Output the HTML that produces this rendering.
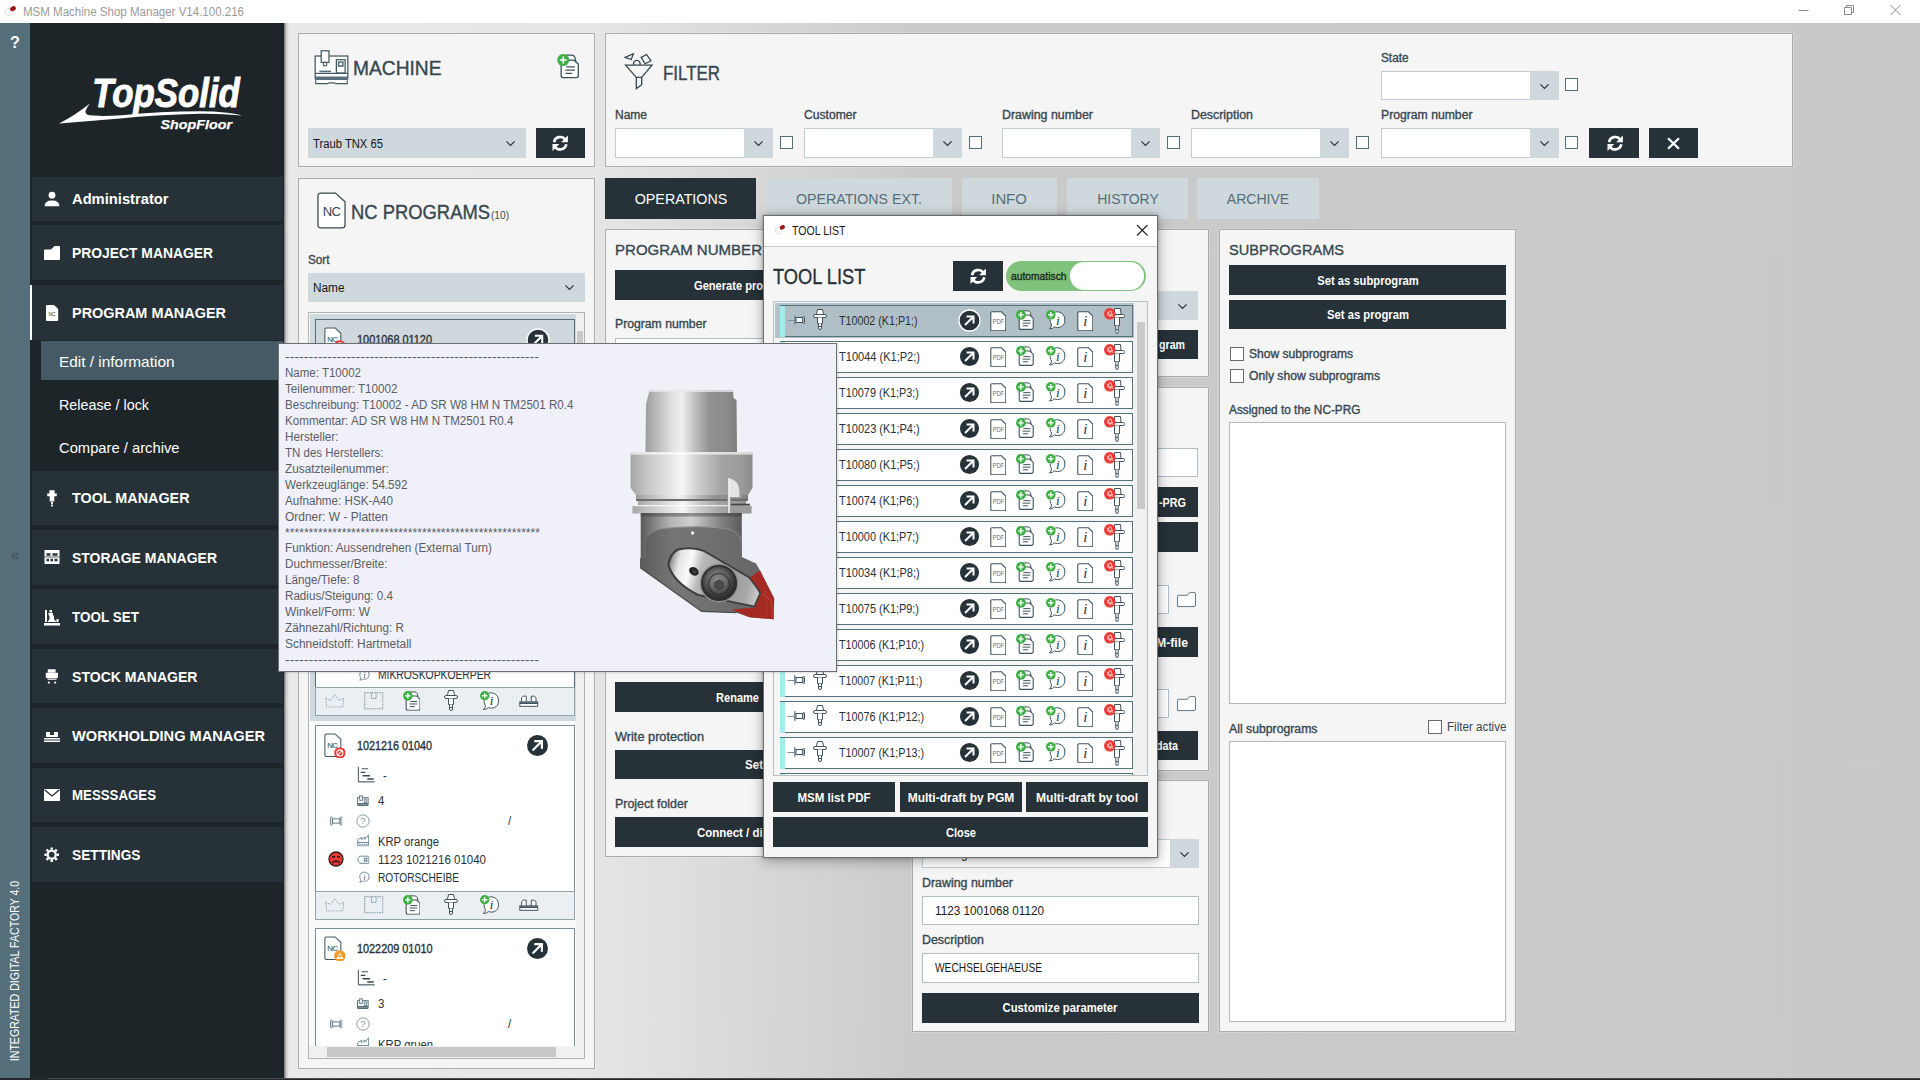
<!DOCTYPE html>
<html><head><meta charset="utf-8"><title>MSM Machine Shop Manager</title>
<style>
html,body{margin:0;padding:0;}
body{width:1920px;height:1080px;position:relative;overflow:hidden;background:#c9c9c9;font-family:"Liberation Sans",sans-serif;}
.b{position:absolute;display:block;}
.t{position:absolute;white-space:pre;}
</style></head><body>

<svg width="0" height="0" style="position:absolute">
<defs>
<linearGradient id="gcyl" x1="0" x2="1" y1="0" y2="0">
 <stop offset="0" stop-color="#9b9b9b"/><stop offset="0.1" stop-color="#b5b5b5"/><stop offset="0.3" stop-color="#e2e2e2"/><stop offset="0.4" stop-color="#efefef"/><stop offset="0.55" stop-color="#bcbcbc"/><stop offset="0.7" stop-color="#929292"/><stop offset="0.9" stop-color="#8a8a8a"/><stop offset="1" stop-color="#7c7c7c"/>
</linearGradient>
<linearGradient id="gcyl2" x1="0" x2="1" y1="0" y2="0">
 <stop offset="0" stop-color="#a5a5a5"/><stop offset="0.12" stop-color="#c2c2c2"/><stop offset="0.35" stop-color="#eaeaea"/><stop offset="0.42" stop-color="#f6f6f6"/><stop offset="0.55" stop-color="#cfcfcf"/><stop offset="0.75" stop-color="#a3a3a3"/><stop offset="0.9" stop-color="#9c9c9c"/><stop offset="1" stop-color="#8c8c8c"/>
</linearGradient>
<linearGradient id="gdark" x1="0" x2="1" y1="0" y2="0">
 <stop offset="0" stop-color="#555"/><stop offset="0.3" stop-color="#9a9a9a"/><stop offset="0.55" stop-color="#7a7a7a"/><stop offset="1" stop-color="#555"/>
</linearGradient>
<linearGradient id="gplate" x1="0" x2="1" y1="0" y2="1">
 <stop offset="0" stop-color="#6c6c6c"/><stop offset="0.35" stop-color="#d8d8d8"/><stop offset="0.6" stop-color="#b5b5b5"/><stop offset="1" stop-color="#6a6a6a"/>
</linearGradient>
<radialGradient id="gscrew" cx="0.45" cy="0.4" r="0.6">
 <stop offset="0" stop-color="#8c8c8c"/><stop offset="0.45" stop-color="#6a6a6a"/><stop offset="0.8" stop-color="#3c3c3c"/><stop offset="1" stop-color="#2a2a2a"/>
</radialGradient>

<symbol id="i-refresh" viewBox="0 0 16 16">
 <path d="M2.7 7.1A5.4 5.4 0 0 1 12.5 5" fill="none" stroke="#fff" stroke-width="2.3"/>
 <path d="M14.7 1.3V7.2H8.8Z" fill="#fff"/>
 <path d="M13.3 8.9A5.4 5.4 0 0 1 3.5 11" fill="none" stroke="#fff" stroke-width="2.3"/>
 <path d="M1.3 14.7V8.8H7.2Z" fill="#fff"/>
</symbol>
<symbol id="i-chev" viewBox="0 0 12 8">
 <path d="M1.5 1.5L6 6L10.5 1.5" fill="none" stroke="#263238" stroke-width="1.3"/>
</symbol>
<symbol id="i-arrow" viewBox="0 0 22 22">
 <circle cx="11" cy="11" r="10" fill="#263238"/>
 <path d="M6.3 15.7L15 7M7.9 6.8H15.2V14.1" fill="none" stroke="#fff" stroke-width="2.1"/>
</symbol>
<symbol id="i-arrow-sel" viewBox="0 0 24 24">
 <circle cx="12" cy="12" r="11" fill="#263238" stroke="#fff" stroke-width="1.4"/>
 <path d="M7.3 16.7L16 8M8.9 7.8H16.2V15.1" fill="none" stroke="#fff" stroke-width="2.1"/>
</symbol>
<symbol id="i-pdf" viewBox="0 0 17 21">
 <path d="M2 0.8H11.6L16 5.2V18.6Q16 20 14.6 20H2.2Q0.8 20 0.8 18.6V2Q0.8 0.8 2 0.8Z" fill="#fff" stroke="#3f535d" stroke-width="1.1"/>
 <text x="8.5" y="12.9" font-family="Liberation Sans, sans-serif" font-size="6.6" fill="#6b6b6b" text-anchor="middle" textLength="11.6" lengthAdjust="spacingAndGlyphs">PDF</text>
</symbol>
<symbol id="i-idoc" viewBox="0 0 17 21">
 <path d="M2 0.8H11.6L16 5.2V18.6Q16 20 14.6 20H2.2Q0.8 20 0.8 18.6V2Q0.8 0.8 2 0.8Z" fill="#fff" stroke="#3f535d" stroke-width="1.1"/>
 <text x="8.4" y="15.4" font-family="Liberation Serif, serif" font-style="italic" font-size="15" fill="#263238" text-anchor="middle">i</text>
</symbol>
<symbol id="i-docplus" viewBox="0 0 18 20">
 <path d="M7 0.9H11.8Q13.6 0.9 14.4 2.6L15.2 5.6H7Z" fill="#fff" stroke="#3f535d" stroke-width="1"/>
 <path d="M4 5H13.6L17.2 8.2V17.8Q17.2 19.4 15.6 19.4H4.8Q3.2 19.4 3.2 17.8V6Z" fill="#fff" stroke="#3f535d" stroke-width="1.1"/>
 <path d="M7.3 10.6H14.4M6.6 13.1H14.4M6.8 15.8H12" stroke="#3f535d" stroke-width="1"/>
 <circle cx="4.9" cy="4.9" r="4.9" fill="#3cb043"/>
 <path d="M4.9 2.1V7.7M2.1 4.9H7.7" stroke="#fff" stroke-width="1.4"/>
</symbol>
<symbol id="i-talkplus" viewBox="0 0 20 20">
 <path d="M4.2 9.6L8.6 2.3Q10.6 1.5 12.6 1.9Q18.9 3.4 18.9 10Q18.9 15.2 14.6 17Q11.6 18.2 8.6 16.9Q6.6 18.9 3.4 18.9Q5.6 17.2 5.6 15Q4.6 13.6 4.3 11.6Z" fill="#fff"/>
 <path d="M8.6 2.3Q10.6 1.5 12.6 1.9Q18.9 3.4 18.9 10Q18.9 15.2 14.6 17Q11.6 18.2 8.6 16.9Q6.6 18.9 3.4 18.9Q5.6 17.2 5.6 15Q4.6 13.6 4.3 11.6L4.2 9.6" fill="none" stroke="#3f535d" stroke-width="1"/>
 <text x="11.8" y="14.8" font-family="Liberation Serif, serif" font-style="italic" font-size="13.5" fill="#263238" text-anchor="middle">i</text>
 <circle cx="4.8" cy="4.8" r="4.8" fill="#3cb043"/>
 <path d="M4.8 2.1V7.5M2.1 4.8H7.5" stroke="#fff" stroke-width="1.4"/>
</symbol>
<symbol id="i-talk" viewBox="0 0 24 24">
 <path d="M7 6Q10 3.6 14 3.8Q21.5 5 21.5 12Q21.5 17.5 16.5 19.6Q13.5 20.7 10.2 19.6Q8 21.6 4.8 21.6Q6.9 19.8 6.8 17.3Q4.6 15 5 11Q5.3 8 7 6Z" fill="none" stroke="#455a64" stroke-width="1.2"/>
 <text x="13.4" y="17" font-family="Liberation Serif, serif" font-style="italic" font-size="13" fill="#263238" text-anchor="middle">i</text>
</symbol>
<symbol id="i-tool" viewBox="0 0 14 21">
 <path d="M4.5 0.5H9.5L10.6 5.5H3.4Z" fill="#fff" stroke="#3f535d" stroke-width="1"/>
 <rect x="0.5" y="5.5" width="13" height="3" rx="1.5" fill="#fff" stroke="#3f535d" stroke-width="1"/>
 <path d="M4.5 8.5V14.5H9.5V8.5" fill="#fff" stroke="#3f535d" stroke-width="1"/>
 <path d="M5.5 14.5V19Q5.5 20.5 7 20.5Q8.5 20.5 8.5 19V14.5" fill="#fff" stroke="#3f535d" stroke-width="1"/>
 <path d="M5.5 17.5H8.5" stroke="#3f535d" stroke-width="1"/>
</symbol>
<symbol id="i-toolred" viewBox="0 0 22 28">
 <path d="M10.5 0.5H16.5L17 6.5H10.5Z" fill="#fff" stroke="#3f535d" stroke-width="1"/>
 <rect x="5.5" y="6.5" width="15" height="3" rx="1.2" fill="#fff" stroke="#3f535d" stroke-width="1"/>
 <path d="M10.5 9.5V17.5H15.5V9.5" fill="#fff" stroke="#3f535d" stroke-width="1"/>
 <path d="M11.8 17.5V24.2Q11.8 25.5 13 25.5Q14.2 25.5 14.2 24.2V17.5" fill="#fff" stroke="#3f535d" stroke-width="1"/>
 <path d="M11.8 21.5H14.2" stroke="#3f535d" stroke-width="0.9"/>
 <circle cx="5.8" cy="5.8" r="5.8" fill="#ee3a35"/>
 <path d="M3.4 6.9L5.2 3.4Q6.4 2.6 7.3 3.6L8.3 7.6Z" fill="none" stroke="#fde0de" stroke-width="0.9"/>
 <path d="M5 8.4Q6 9.4 7 8.4M2.8 3.8L8.8 8.6" fill="none" stroke="#fbc1bd" stroke-width="0.8"/>
</symbol>
<symbol id="i-pin" viewBox="0 0 18 10">
 <path d="M0.4 5.5H7.5" stroke="#78909c" stroke-width="1"/>
 <path d="M7.8 0.3V9.7" stroke="#78909c" stroke-width="1.6"/>
 <rect x="9" y="2.5" width="6.6" height="5" fill="#fff" stroke="#3f535d" stroke-width="1"/>
 <rect x="15.9" y="1.5" width="1.6" height="7" rx="0.7" fill="#fff" stroke="#3f535d" stroke-width="1"/>
</symbol>
<symbol id="i-ncfile" viewBox="0 0 30 38">
 <path d="M4 1H19L29 10V34Q29 37 26 37H4Q1 37 1 34V4Q1 1 4 1Z" fill="#fff" stroke="#37474f" stroke-width="1.3"/>
 <text x="15" y="24.6" font-family="Liberation Sans, sans-serif" font-size="13.5" fill="#37474f" text-anchor="middle" letter-spacing="-0.6">NC</text>
</symbol>
<symbol id="i-ncsmall" viewBox="0 0 22 28">
 <path d="M3 1H12.5L19 7V24Q19 26.5 16.5 26.5H3Q1 26.5 1 24.5V3Q1 1 3 1Z" fill="#fff" stroke="#455a64" stroke-width="1.2"/>
 <text x="9.3" y="16.6" font-family="Liberation Sans, sans-serif" font-size="8.8" fill="#455a64" text-anchor="middle" letter-spacing="-0.6" stroke="#455a64" stroke-width="0.15">NC</text>
</symbol>
<symbol id="i-noentry" viewBox="0 0 12 12">
 <circle cx="6" cy="6" r="5.8" fill="#e53935"/>
 <circle cx="6" cy="6" r="3.1" fill="none" stroke="#fff" stroke-width="1.1"/>
 <path d="M3.9 8.1L8.1 3.9" stroke="#fff" stroke-width="1.1"/>
</symbol>
<symbol id="i-warn" viewBox="0 0 12 12">
 <circle cx="6" cy="6" r="5.8" fill="#f59a23"/>
 <path d="M6 3.2L8.6 7.6H3.4Z" fill="none" stroke="#fff" stroke-width="0.9"/>
 <path d="M2.6 8.6H9.4" stroke="#fff" stroke-width="0.9"/>
</symbol>
<symbol id="i-gantt" viewBox="0 0 20 18">
 <path d="M1.5 0.5V16.5H19" fill="none" stroke="#37474f" stroke-width="1"/>
 <path d="M1.5 17.5H19" stroke="#90a4ae" stroke-width="1" stroke-dasharray="1 1"/>
 <path d="M5 2.5H12" stroke="#37474f" stroke-width="1"/>
 <path d="M4 6.5H9" stroke="#37474f" stroke-width="1.4"/>
 <path d="M6 10H14" stroke="#37474f" stroke-width="1.4"/>
 <path d="M11 13.5H18" stroke="#37474f" stroke-width="1.6"/>
</symbol>
<symbol id="i-mach-s" viewBox="0 0 14 12">
 <rect x="0.5" y="2.5" width="12" height="8" fill="#fff" stroke="#546e7a" stroke-width="1"/>
 <rect x="3" y="0.5" width="3" height="5" fill="#fff" stroke="#546e7a" stroke-width="1"/>
 <rect x="8" y="4" width="3" height="4" fill="#cfd8dc" stroke="#546e7a" stroke-width="0.8"/>
 <path d="M0.5 9H12.5M0.5 11.2H12.5" stroke="#546e7a" stroke-width="1.2"/>
</symbol>
<symbol id="i-clamp" viewBox="0 0 14 10">
 <rect x="0.6" y="0.6" width="2" height="8.8" rx="0.8" fill="#fff" stroke="#546e7a" stroke-width="0.9"/>
 <rect x="11.4" y="0.6" width="2" height="8.8" rx="0.8" fill="#fff" stroke="#546e7a" stroke-width="0.9"/>
 <rect x="3" y="2.6" width="8" height="4.8" fill="#fff" stroke="#546e7a" stroke-width="1"/>
</symbol>
<symbol id="i-q" viewBox="0 0 14 14">
 <circle cx="7" cy="7" r="6.2" fill="#fff" stroke="#7f8c93" stroke-width="0.9"/>
 <text x="7" y="10.4" font-family="Liberation Sans, sans-serif" font-size="9.5" fill="#8a969c" text-anchor="middle">?</text>
</symbol>
<symbol id="i-factory" viewBox="0 0 14 14">
 <path d="M0.8 13.2V6.4L4.8 3.6V6.2L8.8 3.4V6L13 0.8V13.2Z" fill="#fff" stroke="#607d8b" stroke-width="1"/>
 <path d="M0.8 9.4H13" stroke="#607d8b" stroke-width="1"/>
 <path d="M2.2 11.4H12" stroke="#607d8b" stroke-width="1.3" stroke-dasharray="1.7 1"/>
</symbol>
<symbol id="i-tag" viewBox="0 0 14 10">
 <path d="M3.5 1H12.5Q13.3 1 13.3 1.8V8.2Q13.3 9 12.5 9H3.5Q0.8 7.5 0.8 5Q0.8 2.5 3.5 1Z" fill="#fff" stroke="#607d8b" stroke-width="1"/>
 <path d="M8.6 2.4V7.6M10.8 2.4V7.6M7.4 3.8H12M7.4 6.2H12" stroke="#607d8b" stroke-width="0.9"/>
</symbol>
<symbol id="i-sad" viewBox="0 0 16 16">
 <circle cx="8" cy="8" r="7" fill="#e53935" stroke="#2e1a1a" stroke-width="1.3"/>
 <path d="M4 5.8H7M9 5.8H12" stroke="#2e1212" stroke-width="1.5"/>
 <path d="M4.4 11.8Q8 8.2 11.6 11.8" fill="none" stroke="#2e1212" stroke-width="1.3"/>
</symbol>
<symbol id="i-crown" viewBox="0 0 20 14">
 <path d="M0.8 4.3L5.6 6.6L10 0.8L14.6 6.6L19.2 4.3L18.2 13.3H1.8Z" fill="none" stroke="#90a4ae" stroke-width="1" stroke-dasharray="1.6 0.9"/>
</symbol>
<symbol id="i-box" viewBox="0 0 20 18">
 <rect x="0.7" y="0.7" width="18.6" height="16.6" fill="none" stroke="#78909c" stroke-width="1.1" stroke-dasharray="1.5 1"/>
 <path d="M7.6 0.7V6.6H12.4V0.7" fill="none" stroke="#78909c" stroke-width="1" stroke-dasharray="1.5 0.8"/>
</symbol>
<symbol id="i-vise" viewBox="0 0 20 13">
 <path d="M2.6 7V2.8L4.4 1.2H7.4V7" fill="#fff" stroke="#3f535d" stroke-width="1"/>
 <path d="M12.6 7V1.2H15.6L17.4 2.8V7" fill="#fff" stroke="#3f535d" stroke-width="1"/>
 <rect x="0.8" y="7" width="18.4" height="4.6" fill="#fff" stroke="#3f535d" stroke-width="1"/>
 <path d="M0.8 8.4H19.2" stroke="#3f535d" stroke-width="1.7"/>
</symbol>
<symbol id="i-folder" viewBox="0 0 22 18">
 <path d="M1.5 16.5V6Q1.5 4.5 3 4.5H12L14.5 1.5H19Q20.5 1.5 20.5 3V15Q20.5 16.5 19 16.5Z" fill="#fff" stroke="#546e7a" stroke-width="1"/>
</symbol>
<symbol id="i-x" viewBox="0 0 16 16">
 <path d="M2.2 2.4L13.8 13.6M13.8 2.4L2.2 13.6" stroke="#fff" stroke-width="2.5"/>
</symbol>
<symbol id="i-appicon" viewBox="0 0 16 14">
 <ellipse cx="5.5" cy="8.5" rx="4.6" ry="3.6" fill="#fff" stroke="#d5d5d5" stroke-width="0.8" transform="rotate(-30 5.5 8.5)"/>
 <ellipse cx="9.6" cy="5" rx="3.2" ry="2.4" fill="#a01010" transform="rotate(-30 9.6 5)"/>
</symbol>
<symbol id="i-machine" viewBox="0 0 36 36">
 <rect x="1.2" y="6.2" width="33.6" height="21.8" fill="#fff" stroke="#455a64" stroke-width="1.3"/>
 <path d="M1.2 24H34.8" stroke="#455a64" stroke-width="1.2"/>
 <rect x="7.4" y="0.8" width="8" height="12" fill="#fff" stroke="#455a64" stroke-width="1.3"/>
 <rect x="9.8" y="12.8" width="3.2" height="3.4" fill="#fff" stroke="#455a64" stroke-width="1.1"/>
 <path d="M5.5 22H17.5" stroke="#546e7a" stroke-width="1.6"/>
 <rect x="23" y="10" width="9" height="13.6" fill="#fff" stroke="#455a64" stroke-width="1.3"/>
 <rect x="25.3" y="12.5" width="4.4" height="4" fill="#fff" stroke="#546e7a" stroke-width="1.6"/>
 <rect x="0.8" y="28" width="34.4" height="3" fill="#546e7a"/>
 <path d="M1.8 31V34.6H14L15 33.8H21L22 34.6H34.2V31" fill="#fff" stroke="#455a64" stroke-width="1.2"/>
</symbol>
<symbol id="i-filter" viewBox="0 0 30 40">
 <path d="M1.5 12.5H28.5L18 25V32.5L12.5 36.5V25Z" fill="none" stroke="#37474f" stroke-width="1.35"/>
 <path d="M12.5 25H18" stroke="#37474f" stroke-width="1.35"/>
 <path d="M9.9 12.3A3.4 3.4 0 1 1 16.1 12.3" fill="none" stroke="#37474f" stroke-width="1.35"/>
 <path d="M1 4.5L9.5 0.8L7.3 6.7Z" fill="none" stroke="#37474f" stroke-width="1.3"/>
 <path d="M17.5 4.5L23 1.5L27.5 8L21.5 11Z" fill="none" stroke="#37474f" stroke-width="1.3"/>
</symbol>
</defs>
</svg>

<svg width="0" height="0" style="position:absolute"><defs>
<symbol id="s-user" viewBox="0 0 20 20"><circle cx="10" cy="6.2" r="3.4" fill="#fff"/><path d="M2.6 17.2Q2.6 11.4 10 11.4Q17.4 11.4 17.4 17.2Z" fill="#fff"/></symbol>
<symbol id="s-folder" viewBox="0 0 20 20"><path d="M2 17V7.5Q2 6.5 3 6.5H9L12.5 3H17Q18 3 18 4V16Q18 17 17 17Z" fill="#fff"/></symbol>
<symbol id="s-nc" viewBox="0 0 20 20"><path d="M5 2H12L16.2 6V17Q16.2 18 15.2 18H5Q4 18 4 17V3Q4 2 5 2Z" fill="#fff"/><text x="10" y="13" font-family="Liberation Sans, sans-serif" font-size="5" fill="#263238" text-anchor="middle">NC</text></symbol>
<symbol id="s-tool" viewBox="0 0 20 20"><path d="M7.4 2.2H12.6V5.4H14.8V8.2H12.3V13.4H7.7V8.2H5.2V5.4H7.4ZM9.1 14H10.9V16H9.1ZM9.1 16.6H10.9V18.6H9.1Z" fill="#fff"/></symbol>
<symbol id="s-storage" viewBox="0 0 20 20"><path d="M2.5 3H17.5V17H2.5Z" fill="#fff"/><path d="M4.5 6.2H8.5V8.8H4.5ZM10.5 6.2H15.5V8.8H10.5ZM4.5 11.8H7V14.2H4.5ZM8.5 11.8H11V14.2H8.5ZM12.5 11.8H15.5V14.2H12.5Z" fill="#263238"/><path d="M2.5 10H17.5" stroke="#263238" stroke-width="0.8"/></symbol>
<symbol id="s-toolset" viewBox="0 0 20 20"><path d="M3 3H5V15H3ZM2 16H18V18.5H2ZM6.5 6H11V8L12 9V12L14.5 15H5.5L7.5 12V9L6.5 8ZM7.5 3H10V5.5H7.5ZM14.5 12H16.5V15H14.5Z" fill="#fff"/></symbol>
<symbol id="s-stock" viewBox="0 0 20 20"><path d="M5.8 3.2H13.6V6.4H5.8ZM3.8 6.8H16V12H3.8ZM5.4 12.6H14.6V13.8H5.4Z" fill="#fff"/><circle cx="6.8" cy="16.6" r="1.1" fill="#fff"/><circle cx="13.2" cy="16.6" r="1.1" fill="#fff"/></symbol>
<symbol id="s-work" viewBox="0 0 20 20"><path d="M4 6H8V9H12V6H16V11H4ZM2 12H18V13.4H2ZM2 14.4H18V16H2Z" fill="#fff"/></symbol>
<symbol id="s-mail" viewBox="0 0 20 20"><path d="M2 4H18V16H2Z" fill="#fff"/><path d="M2.5 4.8L10 11L17.5 4.8" fill="none" stroke="#263238" stroke-width="1.3"/></symbol>
<symbol id="s-gear" viewBox="0 0 20 20"><circle cx="10" cy="10" r="4.6" fill="none" stroke="#fff" stroke-width="2.6"/><g stroke="#fff" stroke-width="2.8"><path d="M10 1.6V4.4M10 15.6V18.4M1.6 10H4.4M15.6 10H18.4M4.1 4.1L6 6M14 14L15.9 15.9M4.1 15.9L6 14M14 6L15.9 4.1"/></g></symbol>
</defs></svg>
<div class="b" style="left:0px;top:0px;width:1920px;height:23px;background:#ffffff;"></div>
<svg class="b" style="left:4px;top:4px;" width="15" height="13"><use href="#i-appicon"/></svg>
<div class="t" style="left:23px;top:2px;height:20px;line-height:20px;font-size:12px;color:#9a9a9a;transform:scaleX(0.9603);transform-origin:0 50%;">MSM Machine Shop Manager V14.100.216</div>
<svg class="b" style="left:1780px;top:0" width="140" height="23"><path d="M18.5 10.5H28.5" stroke="#8a8a8a" stroke-width="1" fill="none"/><path d="M64.5 7.5H71.5V14.5H64.5ZM66.5 7.5V5.5H73.5V12.5H71.5" stroke="#8a8a8a" stroke-width="1" fill="none"/><path d="M110.5 5L120.5 15M120.5 5L110.5 15" stroke="#8a8a8a" stroke-width="1" fill="none"/></svg>
<div class="b" style="left:283px;top:23px;width:1637px;height:1055px;background:linear-gradient(90deg,#e9e9e9 0px,#e6e6e6 300px,#cacaca 640px,#c9c9c9 100%);"></div>
<div class="b" style="left:0px;top:23px;width:30px;height:1055px;background:#546e7a;"></div>
<div class="t" style="left:15px;top:33px;height:20px;line-height:20px;font-size:17px;color:#ffffff;font-weight:700;transform:translateX(-50%) scaleX(0.9550);transform-origin:50% 50%;">?</div>
<div class="t" style="left:15.3px;top:545px;height:20px;line-height:20px;font-size:16px;color:#3e5460;transform:translateX(-50%) scaleX(0.9550);transform-origin:50% 50%;">«</div>
<div class="t" style="left:15px;top:970.5px;font-size:12px;color:#fff;transform:translate(-50%,-50%) rotate(-90deg) scaleX(0.882);">INTEGRATED DIGITAL FACTORY 4.0</div>
<div class="b" style="left:30px;top:23px;width:254px;height:1055px;background:#1d2529;"></div>
<div class="b" style="left:284px;top:23px;width:5px;height:1055px;background:linear-gradient(90deg,rgba(0,0,0,0.5),rgba(0,0,0,0.12) 50%,rgba(0,0,0,0));"></div>
<div class="b" style="left:0px;top:1078px;width:1920px;height:2px;background:#23272a;"></div>
<div class="b" style="left:48px;top:1078px;width:1872px;height:1px;background:#4a4d50;"></div>
<svg class="b" style="left:50px;top:70px" width="210" height="70" viewBox="0 0 210 70">
<text x="42.3" y="36.6" font-family="Liberation Sans, sans-serif" font-style="italic" font-weight="bold" font-size="41.5" fill="#fff" stroke="#fff" stroke-width="1" textLength="147.5" lengthAdjust="spacingAndGlyphs">TopSolid</text>
<path d="M9 53.5Q24 46 40 33.5Q33 42 37 44.5Q46 47 72 45.2Q110 41.5 150 41.3Q178 41.5 192 45.5Q170 43.5 150 43.8Q105 45 70 48.5Q40 51 9 53.5Z" fill="#fff"/>
<text x="110.5" y="58.7" font-family="Liberation Sans, sans-serif" font-style="italic" font-weight="bold" font-size="13.2" fill="#fff" stroke="#fff" stroke-width="0.25" textLength="71.5" lengthAdjust="spacingAndGlyphs">ShopFloor</text>
</svg>
<div class="b" style="left:32px;top:177px;width:251px;height:44px;background:#263238;"></div>
<div class="t" style="left:72px;top:189.3px;height:20px;line-height:20px;font-size:15px;color:#ffffff;font-weight:700;transform:scaleX(0.9813);transform-origin:0 50%;">Administrator</div>
<svg class="b" style="left:42px;top:189.0px;" width="20" height="20"><use href="#s-user"/></svg>
<div class="b" style="left:32px;top:225px;width:251px;height:55px;background:#263238;"></div>
<div class="t" style="left:72px;top:242.8px;height:20px;line-height:20px;font-size:14.5px;color:#ffffff;font-weight:700;transform:scaleX(0.9564);transform-origin:0 50%;">PROJECT MANAGER</div>
<svg class="b" style="left:42px;top:242.5px;" width="20" height="20"><use href="#s-folder"/></svg>
<div class="b" style="left:32px;top:285px;width:251px;height:55px;background:#263238;"></div>
<div class="t" style="left:72px;top:302.8px;height:20px;line-height:20px;font-size:14.5px;color:#ffffff;font-weight:700;transform:scaleX(0.9957);transform-origin:0 50%;">PROGRAM MANAGER</div>
<svg class="b" style="left:42px;top:302.5px;" width="20" height="20"><use href="#s-nc"/></svg>
<div class="b" style="left:32px;top:471px;width:251px;height:54px;background:#263238;"></div>
<div class="t" style="left:72px;top:488.3px;height:20px;line-height:20px;font-size:14.5px;color:#ffffff;font-weight:700;transform:scaleX(0.9900);transform-origin:0 50%;">TOOL MANAGER</div>
<svg class="b" style="left:42px;top:488.0px;" width="20" height="20"><use href="#s-tool"/></svg>
<div class="b" style="left:32px;top:530px;width:251px;height:54.5px;background:#263238;"></div>
<div class="t" style="left:72px;top:547.55px;height:20px;line-height:20px;font-size:14.5px;color:#ffffff;font-weight:700;transform:scaleX(0.9642);transform-origin:0 50%;">STORAGE MANAGER</div>
<svg class="b" style="left:42px;top:547.25px;" width="20" height="20"><use href="#s-storage"/></svg>
<div class="b" style="left:32px;top:589.4px;width:251px;height:54.4px;background:#263238;"></div>
<div class="t" style="left:72px;top:606.9px;height:20px;line-height:20px;font-size:14.5px;color:#ffffff;font-weight:700;transform:scaleX(0.9308);transform-origin:0 50%;">TOOL SET</div>
<svg class="b" style="left:42px;top:606.6px;" width="20" height="20"><use href="#s-toolset"/></svg>
<div class="b" style="left:32px;top:649px;width:251px;height:54.4px;background:#263238;"></div>
<div class="t" style="left:72px;top:666.5px;height:20px;line-height:20px;font-size:14.5px;color:#ffffff;font-weight:700;transform:scaleX(0.9696);transform-origin:0 50%;">STOCK MANAGER</div>
<svg class="b" style="left:42px;top:666.2px;" width="20" height="20"><use href="#s-stock"/></svg>
<div class="b" style="left:32px;top:708.2px;width:251px;height:54.6px;background:#263238;"></div>
<div class="t" style="left:72px;top:725.8px;height:20px;line-height:20px;font-size:14.5px;color:#ffffff;font-weight:700;transform:scaleX(1.0067);transform-origin:0 50%;">WORKHOLDING MANAGER</div>
<svg class="b" style="left:42px;top:725.5px;" width="20" height="20"><use href="#s-work"/></svg>
<div class="b" style="left:32px;top:767.6px;width:251px;height:54.4px;background:#263238;"></div>
<div class="t" style="left:72px;top:785.1px;height:20px;line-height:20px;font-size:14.5px;color:#ffffff;font-weight:700;transform:scaleX(0.9144);transform-origin:0 50%;">MESSSAGES</div>
<svg class="b" style="left:42px;top:784.8000000000001px;" width="20" height="20"><use href="#s-mail"/></svg>
<div class="b" style="left:32px;top:827px;width:251px;height:54.6px;background:#263238;"></div>
<div class="t" style="left:72px;top:844.5999999999999px;height:20px;line-height:20px;font-size:14.5px;color:#ffffff;font-weight:700;transform:scaleX(0.9447);transform-origin:0 50%;">SETTINGS</div>
<svg class="b" style="left:43.3px;top:845.5999999999999px;" width="17.4" height="17.4"><use href="#s-gear"/></svg>
<div class="b" style="left:30px;top:285px;width:2px;height:55px;background:#ffffff;"></div>
<div class="b" style="left:41px;top:341px;width:242px;height:39px;background:#455a64;"></div>
<div class="t" style="left:59px;top:352px;height:20px;line-height:20px;font-size:15px;color:#fff;transform:scaleX(1.0262);transform-origin:0 50%;">Edit / information</div>
<div class="t" style="left:59px;top:395px;height:20px;line-height:20px;font-size:15px;color:#fff;transform:scaleX(0.9553);transform-origin:0 50%;">Release / lock</div>
<div class="t" style="left:59px;top:438px;height:20px;line-height:20px;font-size:15px;color:#fff;transform:scaleX(0.9833);transform-origin:0 50%;">Compare / archive</div>
<div class="b" style="left:298px;top:33px;width:297px;height:134px;background:#f5f5f5;border:1px solid #ababab;box-sizing:border-box;box-shadow:0 0 0 1px rgba(255,255,255,0.2);"></div>
<svg class="b" style="left:314px;top:50px;" width="35" height="35"><use href="#i-machine"/></svg>
<div class="t" style="left:353px;top:55.0px;height:26px;line-height:26px;font-size:19.5px;color:#37474f;-webkit-text-stroke:0.35px currentColor;transform:scaleX(0.9842);transform-origin:0 50%;">MACHINE</div>
<svg class="b" style="left:557px;top:54px;" width="22.5" height="24.5"><use href="#i-docplus"/></svg>
<div class="b" style="left:308px;top:128px;width:218px;height:30px;background:#cfd8dc;"></div>
<svg class="b" style="left:505px;top:140.0px;" width="11" height="7.3"><use href="#i-chev"/></svg>
<div class="t" style="left:313px;top:134px;height:20px;line-height:20px;font-size:12px;color:#161616;transform:scaleX(0.9370);transform-origin:0 50%;">Traub TNX 65</div>
<div class="b" style="left:536px;top:128px;width:49px;height:30px;background:#263238;"></div>
<svg class="b" style="left:551.4px;top:133.9px;" width="18.4" height="18.4"><use href="#i-refresh"/></svg>
<div class="b" style="left:605px;top:33px;width:1188px;height:134px;background:#f5f5f5;border:1px solid #ababab;box-sizing:border-box;box-shadow:0 0 0 1px rgba(255,255,255,0.2);"></div>
<svg class="b" style="left:624px;top:52.5px;" width="29.5" height="39"><use href="#i-filter"/></svg>
<div class="t" style="left:663px;top:60.0px;height:26px;line-height:26px;font-size:19.5px;color:#37474f;-webkit-text-stroke:0.35px currentColor;transform:scaleX(0.8672);transform-origin:0 50%;">FILTER</div>
<div class="t" style="left:615px;top:105px;height:20px;line-height:20px;font-size:12px;color:#37474f;-webkit-text-stroke:0.35px currentColor;transform:scaleX(0.9997);transform-origin:0 50%;">Name</div>
<div class="b" style="left:615px;top:128px;width:158px;height:29.5px;background:#fff;border:1px solid #c0ccd2;box-sizing:border-box;"></div>
<div class="b" style="left:744px;top:128px;width:29px;height:29.5px;background:#cfd8dc;"></div>
<svg class="b" style="left:753px;top:139.75px;" width="11" height="7.3"><use href="#i-chev"/></svg>
<div class="b" style="left:779.5px;top:136px;width:13px;height:13px;background:#fff;border:1px solid #546e7a;box-sizing:border-box;"></div>
<div class="t" style="left:804px;top:105px;height:20px;line-height:20px;font-size:12px;color:#37474f;-webkit-text-stroke:0.35px currentColor;transform:scaleX(1.0093);transform-origin:0 50%;">Customer</div>
<div class="b" style="left:804px;top:128px;width:158px;height:29.5px;background:#fff;border:1px solid #c0ccd2;box-sizing:border-box;"></div>
<div class="b" style="left:933px;top:128px;width:29px;height:29.5px;background:#cfd8dc;"></div>
<svg class="b" style="left:942px;top:139.75px;" width="11" height="7.3"><use href="#i-chev"/></svg>
<div class="b" style="left:968.5px;top:136px;width:13px;height:13px;background:#fff;border:1px solid #546e7a;box-sizing:border-box;"></div>
<div class="t" style="left:1002px;top:105px;height:20px;line-height:20px;font-size:12px;color:#37474f;-webkit-text-stroke:0.35px currentColor;transform:scaleX(1.0336);transform-origin:0 50%;">Drawing number</div>
<div class="b" style="left:1002px;top:128px;width:158px;height:29.5px;background:#fff;border:1px solid #c0ccd2;box-sizing:border-box;"></div>
<div class="b" style="left:1131px;top:128px;width:29px;height:29.5px;background:#cfd8dc;"></div>
<svg class="b" style="left:1140px;top:139.75px;" width="11" height="7.3"><use href="#i-chev"/></svg>
<div class="b" style="left:1166.5px;top:136px;width:13px;height:13px;background:#fff;border:1px solid #546e7a;box-sizing:border-box;"></div>
<div class="t" style="left:1191px;top:105px;height:20px;line-height:20px;font-size:12px;color:#37474f;-webkit-text-stroke:0.35px currentColor;transform:scaleX(1.0329);transform-origin:0 50%;">Description</div>
<div class="b" style="left:1191px;top:128px;width:158px;height:29.5px;background:#fff;border:1px solid #c0ccd2;box-sizing:border-box;"></div>
<div class="b" style="left:1320px;top:128px;width:29px;height:29.5px;background:#cfd8dc;"></div>
<svg class="b" style="left:1329px;top:139.75px;" width="11" height="7.3"><use href="#i-chev"/></svg>
<div class="b" style="left:1355.5px;top:136px;width:13px;height:13px;background:#fff;border:1px solid #546e7a;box-sizing:border-box;"></div>
<div class="t" style="left:1380.5px;top:105px;height:20px;line-height:20px;font-size:12px;color:#37474f;-webkit-text-stroke:0.35px currentColor;transform:scaleX(1.0162);transform-origin:0 50%;">Program number</div>
<div class="b" style="left:1380.5px;top:128px;width:178.0px;height:29.5px;background:#fff;border:1px solid #c0ccd2;box-sizing:border-box;"></div>
<div class="b" style="left:1529.5px;top:128px;width:29px;height:29.5px;background:#cfd8dc;"></div>
<svg class="b" style="left:1538.5px;top:139.75px;" width="11" height="7.3"><use href="#i-chev"/></svg>
<div class="b" style="left:1565.0px;top:136px;width:13px;height:13px;background:#fff;border:1px solid #546e7a;box-sizing:border-box;"></div>
<div class="t" style="left:1380.5px;top:47.5px;height:20px;line-height:20px;font-size:12px;color:#37474f;-webkit-text-stroke:0.35px currentColor;transform:scaleX(0.9814);transform-origin:0 50%;">State</div>
<div class="b" style="left:1380.5px;top:71px;width:178.0px;height:29px;background:#fff;border:1px solid #c0ccd2;box-sizing:border-box;"></div>
<div class="b" style="left:1529.5px;top:71px;width:29px;height:29px;background:#cfd8dc;"></div>
<svg class="b" style="left:1538.5px;top:82.5px;" width="11" height="7.3"><use href="#i-chev"/></svg>
<div class="b" style="left:1565px;top:78px;width:13px;height:13px;background:#fff;border:1px solid #546e7a;box-sizing:border-box;"></div>
<div class="b" style="left:1589px;top:128px;width:50px;height:30px;background:#263238;"></div>
<svg class="b" style="left:1605.5px;top:133.9px;" width="18.4" height="18.4"><use href="#i-refresh"/></svg>
<div class="b" style="left:1649px;top:128px;width:49px;height:30px;background:#263238;"></div>
<svg class="b" style="left:1666.2px;top:135.8px;" width="15" height="15"><use href="#i-x"/></svg>
<div class="b" style="left:605px;top:178px;width:151px;height:41px;background:#263238;"></div>
<div class="t" style="left:680.5px;top:187.0px;height:24px;line-height:24px;font-size:15.5px;color:#fff;transform:translateX(-50%) scaleX(0.9206);transform-origin:50% 50%;">OPERATIONS</div>
<div class="b" style="left:766px;top:178px;width:186px;height:41px;background:#cfd8dc;"></div>
<div class="t" style="left:859.0px;top:187.0px;height:24px;line-height:24px;font-size:15.5px;color:#546e7a;transform:translateX(-50%) scaleX(0.9162);transform-origin:50% 50%;">OPERATIONS EXT.</div>
<div class="b" style="left:962px;top:178px;width:94.5px;height:41px;background:#cfd8dc;"></div>
<div class="t" style="left:1009.25px;top:187.0px;height:24px;line-height:24px;font-size:15.5px;color:#546e7a;transform:translateX(-50%) scaleX(0.9588);transform-origin:50% 50%;">INFO</div>
<div class="b" style="left:1067px;top:178px;width:121px;height:41px;background:#cfd8dc;"></div>
<div class="t" style="left:1127.5px;top:187.0px;height:24px;line-height:24px;font-size:15.5px;color:#546e7a;transform:translateX(-50%) scaleX(0.9000);transform-origin:50% 50%;">HISTORY</div>
<div class="b" style="left:1197px;top:178px;width:121.5px;height:41px;background:#cfd8dc;"></div>
<div class="t" style="left:1257.75px;top:187.0px;height:24px;line-height:24px;font-size:15.5px;color:#546e7a;transform:translateX(-50%) scaleX(0.9070);transform-origin:50% 50%;">ARCHIVE</div>
<div class="b" style="left:605px;top:229px;width:300px;height:628px;background:#f5f5f5;border:1px solid #ababab;box-sizing:border-box;box-shadow:0 0 0 1px rgba(255,255,255,0.2);"></div>
<div class="t" style="left:615px;top:239.0px;height:22px;line-height:22px;font-size:15.5px;color:#37474f;-webkit-text-stroke:0.35px currentColor;transform:scaleX(0.9699);transform-origin:0 50%;">PROGRAM NUMBER</div>
<div class="b" style="left:615px;top:270px;width:280px;height:30px;background:#263238;"></div>
<div class="t" style="left:694px;top:275.8px;height:20px;line-height:20px;font-size:12px;color:#fff;font-weight:700;transform:scaleX(0.9249);transform-origin:0 50%;">Generate program number</div>
<div class="t" style="left:615px;top:314px;height:20px;line-height:20px;font-size:12px;color:#37474f;-webkit-text-stroke:0.35px currentColor;transform:scaleX(1.0162);transform-origin:0 50%;">Program number</div>
<div class="b" style="left:615px;top:338px;width:280px;height:29px;background:#fff;border:1px solid #b0bec5;box-sizing:border-box;"></div>
<div class="b" style="left:615px;top:682px;width:280px;height:30px;background:#263238;"></div>
<div class="t" style="left:716px;top:687.8px;height:20px;line-height:20px;font-size:12px;color:#fff;font-weight:700;transform:scaleX(0.9210);transform-origin:0 50%;">Rename</div>
<div class="t" style="left:615px;top:727px;height:20px;line-height:20px;font-size:12px;color:#37474f;-webkit-text-stroke:0.35px currentColor;transform:scaleX(1.0619);transform-origin:0 50%;">Write protection</div>
<div class="b" style="left:615px;top:750px;width:280px;height:29px;background:#263238;"></div>
<div class="t" style="left:745px;top:755.3px;height:20px;line-height:20px;font-size:12px;color:#fff;font-weight:700;transform:scaleX(0.9639);transform-origin:0 50%;">Set</div>
<div class="t" style="left:615px;top:794px;height:20px;line-height:20px;font-size:12px;color:#37474f;-webkit-text-stroke:0.35px currentColor;transform:scaleX(1.0325);transform-origin:0 50%;">Project folder</div>
<div class="b" style="left:615px;top:817px;width:280px;height:30px;background:#263238;"></div>
<div class="t" style="left:696.5px;top:822.8px;height:20px;line-height:20px;font-size:12px;color:#fff;font-weight:700;transform:scaleX(0.9559);transform-origin:0 50%;">Connect / disconnect</div>
<div class="b" style="left:912px;top:229px;width:296.5px;height:147.5px;background:#f5f5f5;border:1px solid #ababab;box-sizing:border-box;box-shadow:0 0 0 1px rgba(255,255,255,0.2);"></div>
<div class="b" style="left:922px;top:291px;width:276px;height:29px;background:#cfd8dc;"></div>
<svg class="b" style="left:1177px;top:302.5px;" width="11" height="7.3"><use href="#i-chev"/></svg>
<div class="b" style="left:922px;top:330px;width:276px;height:29px;background:#263238;"></div>
<div class="t" style="left:1159px;top:335.3px;height:20px;line-height:20px;font-size:12px;color:#fff;font-weight:700;transform:scaleX(0.8860);transform-origin:0 50%;">gram</div>
<div class="b" style="left:912px;top:387px;width:296.5px;height:383.5px;background:#f5f5f5;border:1px solid #ababab;box-sizing:border-box;box-shadow:0 0 0 1px rgba(255,255,255,0.2);"></div>
<div class="b" style="left:922px;top:448px;width:276px;height:29px;background:#fff;border:1px solid #b0bec5;box-sizing:border-box;"></div>
<div class="b" style="left:922px;top:487px;width:276px;height:29.5px;background:#263238;"></div>
<div class="t" style="left:1159px;top:492.55px;height:20px;line-height:20px;font-size:12px;color:#fff;font-weight:700;transform:scaleX(0.9000);transform-origin:0 50%;">-PRG</div>
<div class="b" style="left:922px;top:522px;width:276px;height:29.5px;background:#263238;"></div>
<div class="b" style="left:922px;top:585px;width:246.5px;height:29px;background:#fff;border:1px solid #b0bec5;box-sizing:border-box;"></div>
<svg class="b" style="left:1175.5px;top:591px;" width="21" height="17"><use href="#i-folder"/></svg>
<div class="b" style="left:922px;top:627px;width:276px;height:29.5px;background:#263238;"></div>
<div class="t" style="left:1156px;top:632.55px;height:20px;line-height:20px;font-size:12px;color:#fff;font-weight:700;transform:scaleX(1.0213);transform-origin:0 50%;">M-file</div>
<div class="b" style="left:922px;top:689px;width:246.5px;height:29px;background:#fff;border:1px solid #b0bec5;box-sizing:border-box;"></div>
<svg class="b" style="left:1175.5px;top:695px;" width="21" height="17"><use href="#i-folder"/></svg>
<div class="b" style="left:922px;top:730.5px;width:276px;height:29.5px;background:#263238;"></div>
<div class="t" style="left:1155.5px;top:736.05px;height:20px;line-height:20px;font-size:12px;color:#fff;font-weight:700;transform:scaleX(0.8916);transform-origin:0 50%;">data</div>
<div class="b" style="left:912px;top:780px;width:296.5px;height:251.5px;background:#f5f5f5;border:1px solid #ababab;box-sizing:border-box;box-shadow:0 0 0 1px rgba(255,255,255,0.2);"></div>
<div class="b" style="left:922px;top:839px;width:276.70000000000005px;height:29px;background:#fff;border:1px solid #c0ccd2;box-sizing:border-box;"></div>
<div class="b" style="left:1169.7px;top:839px;width:29px;height:29px;background:#cfd8dc;"></div>
<svg class="b" style="left:1178.7px;top:850.5px;" width="11" height="7.3"><use href="#i-chev"/></svg>
<div class="t" style="left:935px;top:843.5px;height:20px;line-height:20px;font-size:12px;color:#1a1a1a;transform:scaleX(0.9404);transform-origin:0 50%;">KRP gruen</div>
<div class="t" style="left:922px;top:872.5px;height:20px;line-height:20px;font-size:12px;color:#37474f;-webkit-text-stroke:0.35px currentColor;transform:scaleX(1.0336);transform-origin:0 50%;">Drawing number</div>
<div class="b" style="left:922px;top:896px;width:276.5px;height:29px;background:#fff;border:1px solid #b0bec5;box-sizing:border-box;"></div>
<div class="t" style="left:935px;top:900.5px;height:20px;line-height:20px;font-size:12px;color:#1a1a1a;transform:scaleX(0.9761);transform-origin:0 50%;">1123 1001068 01120</div>
<div class="t" style="left:922px;top:929.5px;height:20px;line-height:20px;font-size:12px;color:#37474f;-webkit-text-stroke:0.35px currentColor;transform:scaleX(1.0329);transform-origin:0 50%;">Description</div>
<div class="b" style="left:922px;top:953px;width:276.5px;height:29.5px;background:#fff;border:1px solid #b0bec5;box-sizing:border-box;"></div>
<div class="t" style="left:935px;top:957.75px;height:20px;line-height:20px;font-size:12px;color:#1a1a1a;transform:scaleX(0.8490);transform-origin:0 50%;">WECHSELGEHAEUSE</div>
<div class="b" style="left:922px;top:993px;width:276.5px;height:29.5px;background:#263238;"></div>
<div class="t" style="left:1060.25px;top:997.75px;height:20px;line-height:20px;font-size:12px;color:#fff;font-weight:700;transform:translateX(-50%) scaleX(0.9423);transform-origin:50% 50%;">Customize parameter</div>
<div class="b" style="left:1219px;top:229px;width:297px;height:802.5px;background:#f5f5f5;border:1px solid #ababab;box-sizing:border-box;box-shadow:0 0 0 1px rgba(255,255,255,0.2);"></div>
<div class="t" style="left:1229px;top:239.0px;height:22px;line-height:22px;font-size:15.5px;color:#37474f;-webkit-text-stroke:0.35px currentColor;transform:scaleX(0.9403);transform-origin:0 50%;">SUBPROGRAMS</div>
<div class="b" style="left:1229px;top:265px;width:277px;height:30px;background:#263238;"></div>
<div class="t" style="left:1367.5px;top:270.8px;height:20px;line-height:20px;font-size:12px;color:#fff;font-weight:700;transform:translateX(-50%) scaleX(0.9338);transform-origin:50% 50%;">Set as subprogram</div>
<div class="b" style="left:1229px;top:300px;width:277px;height:29px;background:#263238;"></div>
<div class="t" style="left:1367.5px;top:305.3px;height:20px;line-height:20px;font-size:12px;color:#fff;font-weight:700;transform:translateX(-50%) scaleX(0.9386);transform-origin:50% 50%;">Set as program</div>
<div class="b" style="left:1230px;top:347px;width:14px;height:14px;background:#fff;border:1px solid #6a6a6a;box-sizing:border-box;"></div>
<div class="t" style="left:1249px;top:344px;height:20px;line-height:20px;font-size:12px;color:#37474f;-webkit-text-stroke:0.35px currentColor;transform:scaleX(1.0059);transform-origin:0 50%;">Show subprograms</div>
<div class="b" style="left:1230px;top:369px;width:14px;height:14px;background:#fff;border:1px solid #6a6a6a;box-sizing:border-box;"></div>
<div class="t" style="left:1249px;top:366px;height:20px;line-height:20px;font-size:12px;color:#37474f;-webkit-text-stroke:0.35px currentColor;transform:scaleX(1.0124);transform-origin:0 50%;">Only show subprograms</div>
<div class="t" style="left:1229px;top:399.5px;height:20px;line-height:20px;font-size:12px;color:#37474f;-webkit-text-stroke:0.35px currentColor;transform:scaleX(0.9858);transform-origin:0 50%;">Assigned to the NC-PRG</div>
<div class="b" style="left:1229px;top:422px;width:277px;height:281.5px;background:#fff;border:1px solid #b4b8ba;box-sizing:border-box;"></div>
<div class="t" style="left:1229px;top:718.5px;height:20px;line-height:20px;font-size:12px;color:#37474f;-webkit-text-stroke:0.35px currentColor;transform:scaleX(1.0207);transform-origin:0 50%;">All subprograms</div>
<div class="b" style="left:1428px;top:720px;width:13.5px;height:13.5px;background:#fff;border:1px solid #6a6a6a;box-sizing:border-box;"></div>
<div class="t" style="left:1446.5px;top:717px;height:20px;line-height:20px;font-size:12px;color:#37474f;transform:scaleX(0.9699);transform-origin:0 50%;">Filter active</div>
<div class="b" style="left:1229px;top:741px;width:277px;height:281px;background:#fff;border:1px solid #b4b8ba;box-sizing:border-box;"></div>
<div class="b" style="left:298px;top:178px;width:297px;height:891px;background:#f5f5f5;border:1px solid #ababab;box-sizing:border-box;box-shadow:0 0 0 1px rgba(255,255,255,0.2);"></div>
<svg class="b" style="left:317px;top:192.3px;" width="29" height="37"><use href="#i-ncfile"/></svg>
<div class="t" style="left:351px;top:199.0px;height:26px;line-height:26px;font-size:19.5px;color:#37474f;-webkit-text-stroke:0.35px currentColor;transform:scaleX(0.9433);transform-origin:0 50%;">NC PROGRAMS</div>
<div class="t" style="left:490.5px;top:205.5px;height:20px;line-height:20px;font-size:10px;color:#37474f;transform:scaleX(1.0121);transform-origin:0 50%;">(10)</div>
<div class="t" style="left:308px;top:250px;height:20px;line-height:20px;font-size:12px;color:#37474f;-webkit-text-stroke:0.35px currentColor;transform:scaleX(0.9769);transform-origin:0 50%;">Sort</div>
<div class="b" style="left:308px;top:272.5px;width:277px;height:29.5px;background:#cfd8dc;"></div>
<svg class="b" style="left:564px;top:284.25px;" width="11" height="7.3"><use href="#i-chev"/></svg>
<div class="t" style="left:313px;top:277.5px;height:20px;line-height:20px;font-size:12px;color:#161616;transform:scaleX(0.9840);transform-origin:0 50%;">Name</div>
<div class="b" style="left:308px;top:312px;width:277px;height:747px;background:#fafafa;border:1px solid #aeb4b8;box-sizing:border-box;overflow:hidden;">
<div class="b" style="left:-309px;top:-313px;width:0;height:0;">
<div class="b" style="left:310px;top:314px;width:265.5px;height:407px;background:#d0d9de;"></div>
<div class="b" style="left:315px;top:319px;width:260px;height:397px;background:#cfd8dc;border:1px solid #546e7a;box-sizing:border-box;"></div>
<svg class="b" style="left:324px;top:326.5px;" width="19.5" height="25"><use href="#i-ncsmall"/></svg>
<div class="t" style="left:356.5px;top:329.5px;height:20px;line-height:20px;font-size:12px;color:#263238;-webkit-text-stroke:0.35px currentColor;transform:scaleX(0.9087);transform-origin:0 50%;">1001068 01120</div>
<svg class="b" style="left:334.4px;top:340px;" width="11.8" height="11.8"><use href="#i-noentry"/></svg>
<svg class="b" style="left:525.5px;top:327.5px;" width="24" height="24"><use href="#i-arrow-sel"/></svg>
<div class="b" style="left:316px;top:660px;width:258px;height:27px;background:#fff;"></div>
<svg class="b" style="left:356.5px;top:668px;" width="13.5" height="13.5"><use href="#i-talk"/></svg>
<div class="t" style="left:378px;top:665px;height:20px;line-height:20px;font-size:12px;color:#263238;transform:scaleX(0.8602);transform-origin:0 50%;">MIKROSKOPKOERPER</div>
<div class="b" style="left:315px;top:686.5px;width:260px;height:29.5px;background:#eceff1;border:1px solid #90a4ae;box-sizing:border-box;"></div>
<svg class="b" style="left:325px;top:694.0px;" width="19.5" height="13.7"><use href="#i-crown"/></svg>
<svg class="b" style="left:364.3px;top:692.3px;" width="19.6" height="17.6"><use href="#i-box"/></svg>
<svg class="b" style="left:402.6px;top:690.8px;" width="17.8" height="19.8"><use href="#i-docplus"/></svg>
<svg class="b" style="left:444px;top:690.0px;" width="14" height="21"><use href="#i-tool"/></svg>
<svg class="b" style="left:479.7px;top:691.0px;" width="19.6" height="19.6"><use href="#i-talkplus"/></svg>
<svg class="b" style="left:519px;top:694.7px;" width="19.6" height="12.7"><use href="#i-vise"/></svg>
<div class="b" style="left:315px;top:725px;width:260px;height:194.5px;background:#fff;border:1px solid #78909c;box-sizing:border-box;"></div>
<svg class="b" style="left:324px;top:732.5px;" width="19.5" height="25"><use href="#i-ncsmall"/></svg>
<svg class="b" style="left:334.2px;top:746.5px;" width="11.8" height="11.8"><use href="#i-noentry"/></svg>
<div class="t" style="left:356.5px;top:736px;height:20px;line-height:20px;font-size:12px;color:#263238;-webkit-text-stroke:0.35px currentColor;transform:scaleX(0.8990);transform-origin:0 50%;">1021216 01040</div>
<svg class="b" style="left:526px;top:734.3px;" width="23" height="23"><use href="#i-arrow"/></svg>
<svg class="b" style="left:357.3px;top:766.3px;" width="18.6" height="17.6"><use href="#i-gantt"/></svg>
<div class="t" style="left:383px;top:766px;height:20px;line-height:20px;font-size:12px;color:#263238;transform:scaleX(0.9550);transform-origin:0 50%;">-</div>
<svg class="b" style="left:357px;top:794.5px;" width="12.5" height="11.5"><use href="#i-mach-s"/></svg>
<div class="t" style="left:378px;top:791px;height:20px;line-height:20px;font-size:12px;color:#263238;transform:scaleX(0.9550);transform-origin:0 50%;">4</div>
<svg class="b" style="left:330px;top:816px;" width="12.5" height="10"><use href="#i-clamp"/></svg>
<svg class="b" style="left:356px;top:814px;" width="14" height="14"><use href="#i-q"/></svg>
<div class="t" style="left:508px;top:811px;height:20px;line-height:20px;font-size:12px;color:#263238;transform:scaleX(0.9550);transform-origin:0 50%;">/</div>
<svg class="b" style="left:356.8px;top:834px;" width="12.6" height="12.6"><use href="#i-factory"/></svg>
<div class="t" style="left:378px;top:831.5px;height:20px;line-height:20px;font-size:12px;color:#263238;transform:scaleX(0.9362);transform-origin:0 50%;">KRP orange</div>
<svg class="b" style="left:327.5px;top:851px;" width="16" height="16"><use href="#i-sad"/></svg>
<svg class="b" style="left:357px;top:854.5px;" width="12.5" height="9.5"><use href="#i-tag"/></svg>
<div class="t" style="left:378px;top:849.5px;height:20px;line-height:20px;font-size:12px;color:#263238;transform:scaleX(0.9595);transform-origin:0 50%;">1123 1021216 01040</div>
<svg class="b" style="left:356.5px;top:870px;" width="13.5" height="13.5"><use href="#i-talk"/></svg>
<div class="t" style="left:378px;top:867.5px;height:20px;line-height:20px;font-size:12px;color:#263238;transform:scaleX(0.8455);transform-origin:0 50%;">ROTORSCHEIBE</div>
<div class="b" style="left:315px;top:890.5px;width:260px;height:29.5px;background:#eceff1;border:1px solid #90a4ae;box-sizing:border-box;"></div>
<svg class="b" style="left:325px;top:898.0px;" width="19.5" height="13.7"><use href="#i-crown"/></svg>
<svg class="b" style="left:364.3px;top:896.3px;" width="19.6" height="17.6"><use href="#i-box"/></svg>
<svg class="b" style="left:402.6px;top:894.8px;" width="17.8" height="19.8"><use href="#i-docplus"/></svg>
<svg class="b" style="left:444px;top:894.0px;" width="14" height="21"><use href="#i-tool"/></svg>
<svg class="b" style="left:479.7px;top:895.0px;" width="19.6" height="19.6"><use href="#i-talkplus"/></svg>
<svg class="b" style="left:519px;top:898.7px;" width="19.6" height="12.7"><use href="#i-vise"/></svg>
<div class="b" style="left:315px;top:928px;width:260px;height:194.5px;background:#fff;border:1px solid #78909c;box-sizing:border-box;"></div>
<svg class="b" style="left:324px;top:935.5px;" width="19.5" height="25"><use href="#i-ncsmall"/></svg>
<svg class="b" style="left:334.2px;top:949.5px;" width="11.8" height="11.8"><use href="#i-warn"/></svg>
<div class="t" style="left:356.5px;top:939px;height:20px;line-height:20px;font-size:12px;color:#263238;-webkit-text-stroke:0.35px currentColor;transform:scaleX(0.9050);transform-origin:0 50%;">1022209 01010</div>
<svg class="b" style="left:526px;top:937.3px;" width="23" height="23"><use href="#i-arrow"/></svg>
<svg class="b" style="left:357.3px;top:969.3px;" width="18.6" height="17.6"><use href="#i-gantt"/></svg>
<div class="t" style="left:383px;top:969px;height:20px;line-height:20px;font-size:12px;color:#263238;transform:scaleX(0.9550);transform-origin:0 50%;">-</div>
<svg class="b" style="left:357px;top:997.5px;" width="12.5" height="11.5"><use href="#i-mach-s"/></svg>
<div class="t" style="left:378px;top:994px;height:20px;line-height:20px;font-size:12px;color:#263238;transform:scaleX(0.9550);transform-origin:0 50%;">3</div>
<svg class="b" style="left:330px;top:1019px;" width="12.5" height="10"><use href="#i-clamp"/></svg>
<svg class="b" style="left:356px;top:1017px;" width="14" height="14"><use href="#i-q"/></svg>
<div class="t" style="left:508px;top:1014px;height:20px;line-height:20px;font-size:12px;color:#263238;transform:scaleX(0.9550);transform-origin:0 50%;">/</div>
<svg class="b" style="left:356.8px;top:1037px;" width="12.6" height="12.6"><use href="#i-factory"/></svg>
<div class="t" style="left:378px;top:1034.5px;height:20px;line-height:20px;font-size:12px;color:#263238;transform:scaleX(0.9404);transform-origin:0 50%;">KRP gruen</div>
<svg class="b" style="left:357px;top:1057.5px;" width="12.5" height="9.5"><use href="#i-tag"/></svg>
<div class="t" style="left:378px;top:1052.5px;height:20px;line-height:20px;font-size:12px;color:#263238;transform:scaleX(0.9595);transform-origin:0 50%;">1123 1022209 01010</div>
<svg class="b" style="left:356.5px;top:1073px;" width="13.5" height="13.5"><use href="#i-talk"/></svg>
<div class="t" style="left:378px;top:1070.5px;height:20px;line-height:20px;font-size:12px;color:#263238;transform:scaleX(0.8997);transform-origin:0 50%;">GEHAEUSE</div>
<div class="b" style="left:315px;top:1093.5px;width:260px;height:29.5px;background:#eceff1;border:1px solid #90a4ae;box-sizing:border-box;"></div>
<svg class="b" style="left:325px;top:1101.0px;" width="19.5" height="13.7"><use href="#i-crown"/></svg>
<svg class="b" style="left:364.3px;top:1099.3px;" width="19.6" height="17.6"><use href="#i-box"/></svg>
<svg class="b" style="left:402.6px;top:1097.8px;" width="17.8" height="19.8"><use href="#i-docplus"/></svg>
<svg class="b" style="left:444px;top:1097.0px;" width="14" height="21"><use href="#i-tool"/></svg>
<svg class="b" style="left:479.7px;top:1098.0px;" width="19.6" height="19.6"><use href="#i-talkplus"/></svg>
<svg class="b" style="left:519px;top:1101.7px;" width="19.6" height="12.7"><use href="#i-vise"/></svg>
<div class="b" style="left:575.5px;top:313px;width:9px;height:734px;background:#f0f0f0;"></div>
<div class="b" style="left:576.5px;top:331px;width:6px;height:280px;background:#c9c9c9;"></div>
<div class="b" style="left:309px;top:1046px;width:275px;height:12px;background:#f0f0f0;"></div>
<div class="b" style="left:327px;top:1047px;width:228.5px;height:10px;background:#c9c9c9;"></div>
</div></div>
<div class="b" style="left:763px;top:215px;width:394.5px;height:642.5px;background:#f5f5f5;border:1px solid #6e6e6e;box-sizing:border-box;box-shadow:0 2px 12px rgba(0,0,0,0.35),0 0 3px rgba(0,0,0,0.25);"></div>
<div class="b" style="left:764px;top:216px;width:392.5px;height:30.5px;background:#ffffff;"></div>
<div class="b" style="left:764px;top:246px;width:392.5px;height:1px;background:#c8c8c8;"></div>
<svg class="b" style="left:774px;top:223px;" width="14" height="12"><use href="#i-appicon"/></svg>
<div class="t" style="left:792px;top:221px;height:20px;line-height:20px;font-size:12px;color:#1a1a1a;transform:scaleX(0.8816);transform-origin:0 50%;">TOOL LIST</div>
<svg class="b" style="left:1135.8px;top:223.7px" width="13" height="13"><path d="M1 1L11.5 11.5M11.5 1L1 11.5" stroke="#222" stroke-width="1.1" fill="none"/></svg>
<div class="t" style="left:773px;top:262.0px;height:30px;line-height:30px;font-size:22.5px;color:#263238;-webkit-text-stroke:0.35px currentColor;transform:scaleX(0.8129);transform-origin:0 50%;">TOOL LIST</div>
<div class="b" style="left:953px;top:261px;width:50px;height:30px;background:#263238;"></div>
<svg class="b" style="left:968.8px;top:266.8px;" width="18.4" height="18.4"><use href="#i-refresh"/></svg>
<div class="b" style="left:1006px;top:261px;width:139.5px;height:30px;background:#80c27c;border-radius:15px;"></div>
<div class="b" style="left:1070px;top:262px;width:74px;height:28px;background:#ffffff;border-radius:14px;"></div>
<div class="t" style="left:1010.5px;top:266px;height:20px;line-height:20px;font-size:11px;color:#1b2a1b;-webkit-text-stroke:0.35px currentColor;transform:scaleX(0.9358);transform-origin:0 50%;">automatisch</div>
<div class="b" style="left:773px;top:301px;width:375px;height:474.5px;background:#f5f5f5;border:1px solid #b8bfc3;box-sizing:border-box;overflow:hidden;">
<div class="b" style="left:-774px;top:-302px;width:0;height:0;">
<div class="b" style="left:774.5px;top:302.5px;width:363px;height:35px;background:#b3c1c9;"></div>
<div class="b" style="left:780px;top:305px;width:353px;height:32px;background:#b0bec5;border:1px solid #56717e;box-sizing:border-box;"></div>
<div class="b" style="left:780px;top:305.5px;width:5px;height:31px;background:#a4ecec;"></div>
<svg class="b" style="left:787px;top:315px;" width="18" height="10"><use href="#i-pin"/></svg>
<svg class="b" style="left:813px;top:309px;" width="14" height="21"><use href="#i-tool"/></svg>
<div class="t" style="left:838.5px;top:310.5px;height:20px;line-height:20px;font-size:12px;color:#263238;transform:scaleX(0.8915);transform-origin:0 50%;">T10002 (K1;P1;)</div>
<svg class="b" style="left:957.5px;top:309.2px;" width="23" height="23"><use href="#i-arrow-sel"/></svg>
<svg class="b" style="left:989.7px;top:310.59999999999997px;" width="16.8" height="20.8"><use href="#i-pdf"/></svg>
<svg class="b" style="left:1016.4px;top:310.2px;" width="18" height="20"><use href="#i-docplus"/></svg>
<svg class="b" style="left:1045.5px;top:310.3px;" width="20" height="20"><use href="#i-talkplus"/></svg>
<svg class="b" style="left:1076.6px;top:310.59999999999997px;" width="16.8" height="20.8"><use href="#i-idoc"/></svg>
<svg class="b" style="left:1104px;top:308px;" width="22" height="28"><use href="#i-toolred"/></svg>
<div class="b" style="left:780px;top:341px;width:353px;height:32px;background:#fff;border:1px solid #56717e;box-sizing:border-box;border-left:none;"></div>
<div class="b" style="left:780px;top:341.5px;width:5px;height:31px;background:#a4ecec;"></div>
<svg class="b" style="left:787px;top:351px;" width="18" height="10"><use href="#i-pin"/></svg>
<svg class="b" style="left:813px;top:345px;" width="14" height="21"><use href="#i-tool"/></svg>
<div class="t" style="left:838.5px;top:346.5px;height:20px;line-height:20px;font-size:12px;color:#263238;transform:scaleX(0.9199);transform-origin:0 50%;">T10044 (K1;P2;)</div>
<svg class="b" style="left:958.5px;top:346.2px;" width="21" height="21"><use href="#i-arrow"/></svg>
<svg class="b" style="left:989.7px;top:346.59999999999997px;" width="16.8" height="20.8"><use href="#i-pdf"/></svg>
<svg class="b" style="left:1016.4px;top:346.2px;" width="18" height="20"><use href="#i-docplus"/></svg>
<svg class="b" style="left:1045.5px;top:346.3px;" width="20" height="20"><use href="#i-talkplus"/></svg>
<svg class="b" style="left:1076.6px;top:346.59999999999997px;" width="16.8" height="20.8"><use href="#i-idoc"/></svg>
<svg class="b" style="left:1104px;top:344px;" width="22" height="28"><use href="#i-toolred"/></svg>
<div class="b" style="left:780px;top:377px;width:353px;height:32px;background:#fff;border:1px solid #56717e;box-sizing:border-box;border-left:none;"></div>
<div class="b" style="left:780px;top:377.5px;width:5px;height:31px;background:#a4ecec;"></div>
<svg class="b" style="left:787px;top:387px;" width="18" height="10"><use href="#i-pin"/></svg>
<svg class="b" style="left:813px;top:381px;" width="14" height="21"><use href="#i-tool"/></svg>
<div class="t" style="left:838.5px;top:382.5px;height:20px;line-height:20px;font-size:12px;color:#263238;transform:scaleX(0.9086);transform-origin:0 50%;">T10079 (K1;P3;)</div>
<svg class="b" style="left:958.5px;top:382.2px;" width="21" height="21"><use href="#i-arrow"/></svg>
<svg class="b" style="left:989.7px;top:382.59999999999997px;" width="16.8" height="20.8"><use href="#i-pdf"/></svg>
<svg class="b" style="left:1016.4px;top:382.2px;" width="18" height="20"><use href="#i-docplus"/></svg>
<svg class="b" style="left:1045.5px;top:382.3px;" width="20" height="20"><use href="#i-talkplus"/></svg>
<svg class="b" style="left:1076.6px;top:382.59999999999997px;" width="16.8" height="20.8"><use href="#i-idoc"/></svg>
<svg class="b" style="left:1104px;top:380px;" width="22" height="28"><use href="#i-toolred"/></svg>
<div class="b" style="left:780px;top:413px;width:353px;height:32px;background:#fff;border:1px solid #56717e;box-sizing:border-box;border-left:none;"></div>
<div class="b" style="left:780px;top:413.5px;width:5px;height:31px;background:#a4ecec;"></div>
<svg class="b" style="left:787px;top:423px;" width="18" height="10"><use href="#i-pin"/></svg>
<svg class="b" style="left:813px;top:417px;" width="14" height="21"><use href="#i-tool"/></svg>
<div class="t" style="left:838.5px;top:418.5px;height:20px;line-height:20px;font-size:12px;color:#263238;transform:scaleX(0.9165);transform-origin:0 50%;">T10023 (K1;P4;)</div>
<svg class="b" style="left:958.5px;top:418.2px;" width="21" height="21"><use href="#i-arrow"/></svg>
<svg class="b" style="left:989.7px;top:418.59999999999997px;" width="16.8" height="20.8"><use href="#i-pdf"/></svg>
<svg class="b" style="left:1016.4px;top:418.2px;" width="18" height="20"><use href="#i-docplus"/></svg>
<svg class="b" style="left:1045.5px;top:418.3px;" width="20" height="20"><use href="#i-talkplus"/></svg>
<svg class="b" style="left:1076.6px;top:418.59999999999997px;" width="16.8" height="20.8"><use href="#i-idoc"/></svg>
<svg class="b" style="left:1104px;top:416px;" width="22" height="28"><use href="#i-toolred"/></svg>
<div class="b" style="left:780px;top:449px;width:353px;height:32px;background:#fff;border:1px solid #56717e;box-sizing:border-box;border-left:none;"></div>
<div class="b" style="left:780px;top:449.5px;width:5px;height:31px;background:#a4ecec;"></div>
<svg class="b" style="left:787px;top:459px;" width="18" height="10"><use href="#i-pin"/></svg>
<svg class="b" style="left:813px;top:453px;" width="14" height="21"><use href="#i-tool"/></svg>
<div class="t" style="left:838.5px;top:454.5px;height:20px;line-height:20px;font-size:12px;color:#263238;transform:scaleX(0.9165);transform-origin:0 50%;">T10080 (K1;P5;)</div>
<svg class="b" style="left:958.5px;top:454.2px;" width="21" height="21"><use href="#i-arrow"/></svg>
<svg class="b" style="left:989.7px;top:454.59999999999997px;" width="16.8" height="20.8"><use href="#i-pdf"/></svg>
<svg class="b" style="left:1016.4px;top:454.2px;" width="18" height="20"><use href="#i-docplus"/></svg>
<svg class="b" style="left:1045.5px;top:454.3px;" width="20" height="20"><use href="#i-talkplus"/></svg>
<svg class="b" style="left:1076.6px;top:454.59999999999997px;" width="16.8" height="20.8"><use href="#i-idoc"/></svg>
<svg class="b" style="left:1104px;top:452px;" width="22" height="28"><use href="#i-toolred"/></svg>
<div class="b" style="left:780px;top:485px;width:353px;height:32px;background:#fff;border:1px solid #56717e;box-sizing:border-box;border-left:none;"></div>
<div class="b" style="left:780px;top:485.5px;width:5px;height:31px;background:#a4ecec;"></div>
<svg class="b" style="left:787px;top:495px;" width="18" height="10"><use href="#i-pin"/></svg>
<svg class="b" style="left:813px;top:489px;" width="14" height="21"><use href="#i-tool"/></svg>
<div class="t" style="left:838.5px;top:490.5px;height:20px;line-height:20px;font-size:12px;color:#263238;transform:scaleX(0.9086);transform-origin:0 50%;">T10074 (K1;P6;)</div>
<svg class="b" style="left:958.5px;top:490.2px;" width="21" height="21"><use href="#i-arrow"/></svg>
<svg class="b" style="left:989.7px;top:490.59999999999997px;" width="16.8" height="20.8"><use href="#i-pdf"/></svg>
<svg class="b" style="left:1016.4px;top:490.2px;" width="18" height="20"><use href="#i-docplus"/></svg>
<svg class="b" style="left:1045.5px;top:490.3px;" width="20" height="20"><use href="#i-talkplus"/></svg>
<svg class="b" style="left:1076.6px;top:490.59999999999997px;" width="16.8" height="20.8"><use href="#i-idoc"/></svg>
<svg class="b" style="left:1104px;top:488px;" width="22" height="28"><use href="#i-toolred"/></svg>
<div class="b" style="left:780px;top:521px;width:353px;height:32px;background:#fff;border:1px solid #56717e;box-sizing:border-box;border-left:none;"></div>
<div class="b" style="left:780px;top:521.5px;width:5px;height:31px;background:#a4ecec;"></div>
<svg class="b" style="left:787px;top:531px;" width="18" height="10"><use href="#i-pin"/></svg>
<svg class="b" style="left:813px;top:525px;" width="14" height="21"><use href="#i-tool"/></svg>
<div class="t" style="left:838.5px;top:526.5px;height:20px;line-height:20px;font-size:12px;color:#263238;transform:scaleX(0.9086);transform-origin:0 50%;">T10000 (K1;P7;)</div>
<svg class="b" style="left:958.5px;top:526.2px;" width="21" height="21"><use href="#i-arrow"/></svg>
<svg class="b" style="left:989.7px;top:526.6px;" width="16.8" height="20.8"><use href="#i-pdf"/></svg>
<svg class="b" style="left:1016.4px;top:526.2px;" width="18" height="20"><use href="#i-docplus"/></svg>
<svg class="b" style="left:1045.5px;top:526.3000000000001px;" width="20" height="20"><use href="#i-talkplus"/></svg>
<svg class="b" style="left:1076.6px;top:526.6px;" width="16.8" height="20.8"><use href="#i-idoc"/></svg>
<svg class="b" style="left:1104px;top:524px;" width="22" height="28"><use href="#i-toolred"/></svg>
<div class="b" style="left:780px;top:557px;width:353px;height:32px;background:#fff;border:1px solid #56717e;box-sizing:border-box;border-left:none;"></div>
<div class="b" style="left:780px;top:557.5px;width:5px;height:31px;background:#a4ecec;"></div>
<svg class="b" style="left:787px;top:567px;" width="18" height="10"><use href="#i-pin"/></svg>
<svg class="b" style="left:813px;top:561px;" width="14" height="21"><use href="#i-tool"/></svg>
<div class="t" style="left:838.5px;top:562.5px;height:20px;line-height:20px;font-size:12px;color:#263238;transform:scaleX(0.9165);transform-origin:0 50%;">T10034 (K1;P8;)</div>
<svg class="b" style="left:958.5px;top:562.2px;" width="21" height="21"><use href="#i-arrow"/></svg>
<svg class="b" style="left:989.7px;top:562.6px;" width="16.8" height="20.8"><use href="#i-pdf"/></svg>
<svg class="b" style="left:1016.4px;top:562.2px;" width="18" height="20"><use href="#i-docplus"/></svg>
<svg class="b" style="left:1045.5px;top:562.3000000000001px;" width="20" height="20"><use href="#i-talkplus"/></svg>
<svg class="b" style="left:1076.6px;top:562.6px;" width="16.8" height="20.8"><use href="#i-idoc"/></svg>
<svg class="b" style="left:1104px;top:560px;" width="22" height="28"><use href="#i-toolred"/></svg>
<div class="b" style="left:780px;top:593px;width:353px;height:32px;background:#fff;border:1px solid #56717e;box-sizing:border-box;border-left:none;"></div>
<div class="b" style="left:780px;top:593.5px;width:5px;height:31px;background:#a4ecec;"></div>
<svg class="b" style="left:787px;top:603px;" width="18" height="10"><use href="#i-pin"/></svg>
<svg class="b" style="left:813px;top:597px;" width="14" height="21"><use href="#i-tool"/></svg>
<div class="t" style="left:838.5px;top:598.5px;height:20px;line-height:20px;font-size:12px;color:#263238;transform:scaleX(0.9086);transform-origin:0 50%;">T10075 (K1;P9;)</div>
<svg class="b" style="left:958.5px;top:598.2px;" width="21" height="21"><use href="#i-arrow"/></svg>
<svg class="b" style="left:989.7px;top:598.6px;" width="16.8" height="20.8"><use href="#i-pdf"/></svg>
<svg class="b" style="left:1016.4px;top:598.2px;" width="18" height="20"><use href="#i-docplus"/></svg>
<svg class="b" style="left:1045.5px;top:598.3000000000001px;" width="20" height="20"><use href="#i-talkplus"/></svg>
<svg class="b" style="left:1076.6px;top:598.6px;" width="16.8" height="20.8"><use href="#i-idoc"/></svg>
<svg class="b" style="left:1104px;top:596px;" width="22" height="28"><use href="#i-toolred"/></svg>
<div class="b" style="left:780px;top:629px;width:353px;height:32px;background:#fff;border:1px solid #56717e;box-sizing:border-box;border-left:none;"></div>
<div class="b" style="left:780px;top:629.5px;width:5px;height:31px;background:#a4ecec;"></div>
<svg class="b" style="left:787px;top:639px;" width="18" height="10"><use href="#i-pin"/></svg>
<svg class="b" style="left:813px;top:633px;" width="14" height="21"><use href="#i-tool"/></svg>
<div class="t" style="left:838.5px;top:634.5px;height:20px;line-height:20px;font-size:12px;color:#263238;transform:scaleX(0.8973);transform-origin:0 50%;">T10006 (K1;P10;)</div>
<svg class="b" style="left:958.5px;top:634.2px;" width="21" height="21"><use href="#i-arrow"/></svg>
<svg class="b" style="left:989.7px;top:634.6px;" width="16.8" height="20.8"><use href="#i-pdf"/></svg>
<svg class="b" style="left:1016.4px;top:634.2px;" width="18" height="20"><use href="#i-docplus"/></svg>
<svg class="b" style="left:1045.5px;top:634.3000000000001px;" width="20" height="20"><use href="#i-talkplus"/></svg>
<svg class="b" style="left:1076.6px;top:634.6px;" width="16.8" height="20.8"><use href="#i-idoc"/></svg>
<svg class="b" style="left:1104px;top:632px;" width="22" height="28"><use href="#i-toolred"/></svg>
<div class="b" style="left:780px;top:665px;width:353px;height:32px;background:#fff;border:1px solid #56717e;box-sizing:border-box;border-left:none;"></div>
<div class="b" style="left:780px;top:665.5px;width:5px;height:31px;background:#a4ecec;"></div>
<svg class="b" style="left:787px;top:675px;" width="18" height="10"><use href="#i-pin"/></svg>
<svg class="b" style="left:813px;top:669px;" width="14" height="21"><use href="#i-tool"/></svg>
<div class="t" style="left:838.5px;top:670.5px;height:20px;line-height:20px;font-size:12px;color:#263238;transform:scaleX(0.8877);transform-origin:0 50%;">T10007 (K1;P11;)</div>
<svg class="b" style="left:958.5px;top:670.2px;" width="21" height="21"><use href="#i-arrow"/></svg>
<svg class="b" style="left:989.7px;top:670.6px;" width="16.8" height="20.8"><use href="#i-pdf"/></svg>
<svg class="b" style="left:1016.4px;top:670.2px;" width="18" height="20"><use href="#i-docplus"/></svg>
<svg class="b" style="left:1045.5px;top:670.3000000000001px;" width="20" height="20"><use href="#i-talkplus"/></svg>
<svg class="b" style="left:1076.6px;top:670.6px;" width="16.8" height="20.8"><use href="#i-idoc"/></svg>
<svg class="b" style="left:1104px;top:668px;" width="22" height="28"><use href="#i-toolred"/></svg>
<div class="b" style="left:780px;top:701px;width:353px;height:32px;background:#fff;border:1px solid #56717e;box-sizing:border-box;border-left:none;"></div>
<div class="b" style="left:780px;top:701.5px;width:5px;height:31px;background:#a4ecec;"></div>
<svg class="b" style="left:787px;top:711px;" width="18" height="10"><use href="#i-pin"/></svg>
<svg class="b" style="left:813px;top:705px;" width="14" height="21"><use href="#i-tool"/></svg>
<div class="t" style="left:838.5px;top:706.5px;height:20px;line-height:20px;font-size:12px;color:#263238;transform:scaleX(0.8973);transform-origin:0 50%;">T10076 (K1;P12;)</div>
<svg class="b" style="left:958.5px;top:706.2px;" width="21" height="21"><use href="#i-arrow"/></svg>
<svg class="b" style="left:989.7px;top:706.6px;" width="16.8" height="20.8"><use href="#i-pdf"/></svg>
<svg class="b" style="left:1016.4px;top:706.2px;" width="18" height="20"><use href="#i-docplus"/></svg>
<svg class="b" style="left:1045.5px;top:706.3000000000001px;" width="20" height="20"><use href="#i-talkplus"/></svg>
<svg class="b" style="left:1076.6px;top:706.6px;" width="16.8" height="20.8"><use href="#i-idoc"/></svg>
<svg class="b" style="left:1104px;top:704px;" width="22" height="28"><use href="#i-toolred"/></svg>
<div class="b" style="left:780px;top:737px;width:353px;height:32px;background:#fff;border:1px solid #56717e;box-sizing:border-box;border-left:none;"></div>
<div class="b" style="left:780px;top:737.5px;width:5px;height:31px;background:#a4ecec;"></div>
<svg class="b" style="left:787px;top:747px;" width="18" height="10"><use href="#i-pin"/></svg>
<svg class="b" style="left:813px;top:741px;" width="14" height="21"><use href="#i-tool"/></svg>
<div class="t" style="left:838.5px;top:742.5px;height:20px;line-height:20px;font-size:12px;color:#263238;transform:scaleX(0.8973);transform-origin:0 50%;">T10007 (K1;P13;)</div>
<svg class="b" style="left:958.5px;top:742.2px;" width="21" height="21"><use href="#i-arrow"/></svg>
<svg class="b" style="left:989.7px;top:742.6px;" width="16.8" height="20.8"><use href="#i-pdf"/></svg>
<svg class="b" style="left:1016.4px;top:742.2px;" width="18" height="20"><use href="#i-docplus"/></svg>
<svg class="b" style="left:1045.5px;top:742.3000000000001px;" width="20" height="20"><use href="#i-talkplus"/></svg>
<svg class="b" style="left:1076.6px;top:742.6px;" width="16.8" height="20.8"><use href="#i-idoc"/></svg>
<svg class="b" style="left:1104px;top:740px;" width="22" height="28"><use href="#i-toolred"/></svg>
<div class="b" style="left:780px;top:773px;width:353px;height:32px;background:#fff;border:1px solid #56717e;box-sizing:border-box;border-left:none;"></div>
<div class="b" style="left:780px;top:773.5px;width:5px;height:31px;background:#a4ecec;"></div>
<svg class="b" style="left:787px;top:783px;" width="18" height="10"><use href="#i-pin"/></svg>
<svg class="b" style="left:813px;top:777px;" width="14" height="21"><use href="#i-tool"/></svg>
<div class="t" style="left:838.5px;top:778.5px;height:20px;line-height:20px;font-size:12px;color:#263238;transform:scaleX(0.8973);transform-origin:0 50%;">T10008 (K1;P14;)</div>
<svg class="b" style="left:958.5px;top:778.2px;" width="21" height="21"><use href="#i-arrow"/></svg>
<svg class="b" style="left:989.7px;top:778.6px;" width="16.8" height="20.8"><use href="#i-pdf"/></svg>
<svg class="b" style="left:1016.4px;top:778.2px;" width="18" height="20"><use href="#i-docplus"/></svg>
<svg class="b" style="left:1045.5px;top:778.3000000000001px;" width="20" height="20"><use href="#i-talkplus"/></svg>
<svg class="b" style="left:1076.6px;top:778.6px;" width="16.8" height="20.8"><use href="#i-idoc"/></svg>
<svg class="b" style="left:1104px;top:776px;" width="22" height="28"><use href="#i-toolred"/></svg>
<div class="b" style="left:1134px;top:302px;width:13px;height:473px;background:#f0f0f0;"></div>
<div class="b" style="left:1136.5px;top:322px;width:8px;height:187px;background:#c9c9c9;"></div>
</div></div>
<div class="b" style="left:773px;top:782px;width:121.5px;height:29.5px;background:#263238;"></div>
<div class="t" style="left:833.75px;top:787.55px;height:20px;line-height:20px;font-size:12px;color:#fff;font-weight:700;transform:translateX(-50%) scaleX(0.9605);transform-origin:50% 50%;">MSM list PDF</div>
<div class="b" style="left:900px;top:782px;width:121.5px;height:29.5px;background:#263238;"></div>
<div class="t" style="left:960.75px;top:787.55px;height:20px;line-height:20px;font-size:12px;color:#fff;font-weight:700;transform:translateX(-50%) scaleX(0.9985);transform-origin:50% 50%;">Multi-draft by PGM</div>
<div class="b" style="left:1026px;top:782px;width:122px;height:29.5px;background:#263238;"></div>
<div class="t" style="left:1087.0px;top:787.55px;height:20px;line-height:20px;font-size:12px;color:#fff;font-weight:700;transform:translateX(-50%) scaleX(1.0067);transform-origin:50% 50%;">Multi-draft by tool</div>
<div class="b" style="left:773px;top:817px;width:375px;height:30px;background:#263238;"></div>
<div class="t" style="left:960.5px;top:822.8px;height:20px;line-height:20px;font-size:12px;color:#fff;font-weight:700;transform:translateX(-50%) scaleX(0.9180);transform-origin:50% 50%;">Close</div>
<div class="b" style="left:278px;top:343px;width:559px;height:329px;background:#f0f1f8;border:1px solid #6f6f6f;box-sizing:border-box;box-shadow:1px 1px 2px rgba(0,0,0,0.15);"></div>
<div class="t" style="left:285px;top:347px;height:20px;line-height:20px;font-size:12px;color:#5a5d66;transform:scaleX(1.1769);transform-origin:0 50%;">------------------------------------------------------</div>
<div class="t" style="left:285px;top:363px;height:20px;line-height:20px;font-size:12px;color:#5a5d66;transform:scaleX(0.9601);transform-origin:0 50%;">Name: T10002</div>
<div class="t" style="left:285px;top:379px;height:20px;line-height:20px;font-size:12px;color:#5a5d66;transform:scaleX(0.9711);transform-origin:0 50%;">Teilenummer: T10002</div>
<div class="t" style="left:285px;top:395px;height:20px;line-height:20px;font-size:12px;color:#5a5d66;transform:scaleX(0.9669);transform-origin:0 50%;">Beschreibung: T10002 - AD SR W8 HM N TM2501 R0.4</div>
<div class="t" style="left:285px;top:411px;height:20px;line-height:20px;font-size:12px;color:#5a5d66;transform:scaleX(0.9688);transform-origin:0 50%;">Kommentar: AD SR W8 HM N TM2501 R0.4</div>
<div class="t" style="left:285px;top:427px;height:20px;line-height:20px;font-size:12px;color:#5a5d66;transform:scaleX(0.9784);transform-origin:0 50%;">Hersteller:</div>
<div class="t" style="left:285px;top:443px;height:20px;line-height:20px;font-size:12px;color:#5a5d66;transform:scaleX(0.9592);transform-origin:0 50%;">TN des Herstellers:</div>
<div class="t" style="left:285px;top:459px;height:20px;line-height:20px;font-size:12px;color:#5a5d66;transform:scaleX(0.9870);transform-origin:0 50%;">Zusatzteilenummer:</div>
<div class="t" style="left:285px;top:475px;height:20px;line-height:20px;font-size:12px;color:#5a5d66;transform:scaleX(0.9681);transform-origin:0 50%;">Werkzeuglänge: 54.592</div>
<div class="t" style="left:285px;top:491px;height:20px;line-height:20px;font-size:12px;color:#5a5d66;transform:scaleX(0.9695);transform-origin:0 50%;">Aufnahme: HSK-A40</div>
<div class="t" style="left:285px;top:507px;height:20px;line-height:20px;font-size:12px;color:#5a5d66;transform:scaleX(0.9965);transform-origin:0 50%;">Ordner: W - Platten</div>
<div class="t" style="left:285px;top:522.5px;height:20px;line-height:20px;font-size:12px;color:#5a5d66;transform:scaleX(1.0113);transform-origin:0 50%;">******************************************************</div>
<div class="t" style="left:285px;top:537.5px;height:20px;line-height:20px;font-size:12px;color:#5a5d66;transform:scaleX(0.9759);transform-origin:0 50%;">Funktion: Aussendrehen (External Turn)</div>
<div class="t" style="left:285px;top:553.5px;height:20px;line-height:20px;font-size:12px;color:#5a5d66;transform:scaleX(0.9727);transform-origin:0 50%;">Duchmesser/Breite:</div>
<div class="t" style="left:285px;top:569.5px;height:20px;line-height:20px;font-size:12px;color:#5a5d66;transform:scaleX(0.9767);transform-origin:0 50%;">Länge/Tiefe: 8</div>
<div class="t" style="left:285px;top:585.5px;height:20px;line-height:20px;font-size:12px;color:#5a5d66;transform:scaleX(0.9694);transform-origin:0 50%;">Radius/Steigung: 0.4</div>
<div class="t" style="left:285px;top:601.5px;height:20px;line-height:20px;font-size:12px;color:#5a5d66;transform:scaleX(0.9961);transform-origin:0 50%;">Winkel/Form: W</div>
<div class="t" style="left:285px;top:617.5px;height:20px;line-height:20px;font-size:12px;color:#5a5d66;transform:scaleX(0.9748);transform-origin:0 50%;">Zähnezahl/Richtung: R</div>
<div class="t" style="left:285px;top:633.5px;height:20px;line-height:20px;font-size:12px;color:#5a5d66;transform:scaleX(0.9947);transform-origin:0 50%;">Schneidstoff: Hartmetall</div>
<div class="t" style="left:285px;top:650px;height:20px;line-height:20px;font-size:12px;color:#5a5d66;transform:scaleX(1.1769);transform-origin:0 50%;">------------------------------------------------------</div>
<svg class="b" style="left:620px;top:380px" width="170" height="250" viewBox="620 380 170 250">
<defs>
<linearGradient id="tb" x1="0" x2="1" y1="0" y2="0"><stop offset="0" stop-color="#5c5c5c"/><stop offset="0.25" stop-color="#767676"/><stop offset="0.6" stop-color="#6e6e6e"/><stop offset="1" stop-color="#626262"/></linearGradient>
<linearGradient id="tn" x1="0" x2="1" y1="0" y2="0"><stop offset="0" stop-color="#5a5a5a"/><stop offset="0.3" stop-color="#b5b5b5"/><stop offset="0.5" stop-color="#cfcfcf"/><stop offset="0.8" stop-color="#808080"/><stop offset="1" stop-color="#5c5c5c"/></linearGradient>
<linearGradient id="tr" x1="0" x2="1" y1="0" y2="1"><stop offset="0" stop-color="#b23028"/><stop offset="0.6" stop-color="#a32620"/><stop offset="1" stop-color="#c0392f"/></linearGradient>
<linearGradient id="gplate2" gradientUnits="userSpaceOnUse" x1="668" y1="575" x2="760" y2="598"><stop offset="0" stop-color="#9a9a9a"/><stop offset="0.08" stop-color="#e6e6e6"/><stop offset="0.2" stop-color="#fafafa"/><stop offset="0.32" stop-color="#b9b9b9"/><stop offset="0.6" stop-color="#9a9a9a"/><stop offset="0.85" stop-color="#a8a8a8"/><stop offset="1" stop-color="#d2d2d2"/></linearGradient>
</defs>
<!-- shank -->
<path d="M649.5 390.5H733L733.5 398L736.5 400L737 452H645.5L646 404Z" fill="url(#gcyl)"/>
<path d="M649.5 390.5H733V392H649.5Z" fill="#e8e8e8" opacity="0.8"/>
<!-- flange -->
<path d="M630.5 452.5H752.5V488L748 495H636L630.5 488Z" fill="url(#gcyl2)"/>
<path d="M630.5 452.5H752.5V454.5H630.5Z" fill="#fff" opacity="0.7"/>
<path d="M636 495H748V499H636Z" fill="url(#gcyl)"/>
<path d="M636 499H748V501H636Z" fill="#6d6d6d"/>
<path d="M638 501H746V505H638Z" fill="url(#gcyl2)"/>
<path d="M632.5 505H751.5V513.5H632.5Z" fill="url(#gcyl2)"/>
<path d="M632.5 505H751.5V506.2H632.5Z" fill="#fff" opacity="0.8"/>
<!-- notch -->
<path d="M727.5 476Q741.5 478 741.5 492V498H731V504H748L751 507V513H727.5Z" fill="#9c9c9c"/>
<path d="M729 478Q739 480 739.5 492V497H729Z" fill="#e4e4e4"/>
<path d="M729 478V513" stroke="#f4f4f4" stroke-width="1.6"/>
<path d="M731 504.5H750" stroke="#444" stroke-width="1.6"/>
<!-- neck -->
<path d="M640.7 513H741.8V560H640.7Z" fill="url(#tn)"/>
<path d="M640.7 513H741.8V516.5H640.7Z" fill="#333" opacity="0.4"/>
<!-- body -->
<path d="M647.6 536Q649 531.5 662 528.5Q703 524.5 730 529.5Q739 532.5 741.2 540.5L741.8 557L756 563.5L760 570.6L774.2 598.5L773.6 619.2L749.6 617.3L736.6 612.7L701.6 611.4L640 567.4V558.3H647.2Z" fill="url(#tb)"/>
<path d="M647.6 536Q649 531.5 662 528.5Q703 524.5 730 529.5Q739 532.5 741.2 540.5" fill="none" stroke="#8e8e8e" stroke-width="1"/>
<path d="M640 567.4L701.6 611.4L736.6 612.7" fill="none" stroke="#4a4a4a" stroke-width="1.2"/>
<path d="M647.2 538V558.3" stroke="#585858" stroke-width="1"/>
<circle cx="692.6" cy="533" r="1.7" fill="#f2f2f2"/>
<!-- insert -->
<path d="M760 570.6L774.2 598.5L773.6 619.2L749.6 617.3L731.4 609.5L754.8 607.6L761.2 593.3L749.6 577.7Z" fill="#a52a23"/>
<path d="M761.2 593.3L771 600L773.6 619.2" fill="none" stroke="#c5483f" stroke-width="0.9"/>
<path d="M765 590L767.5 613" stroke="#c9544b" stroke-width="0.6" stroke-dasharray="0.8 0.8"/>
<!-- clamp plate -->
<path d="M677 548.6Q692.5 545.2 704.2 549.9L749.6 576.5Q760.5 590 761.2 593.3L754.8 607.6L697.8 595.9Q672 583 667.3 564.8Q669 553 677 548.6Z" fill="#3f3f3f"/>
<path d="M678.5 550.6Q692.5 547.4 703.4 551.8L748.4 578Q758.6 590.6 759.2 593.5L753.8 605.6L698.6 594Q674.6 582 669.6 565Q671.2 554.4 678.5 550.6Z" fill="url(#gplate2)"/>
<!-- screw -->
<circle cx="719.1" cy="583" r="19.4" fill="#8f8f8f"/>
<circle cx="719.1" cy="583" r="18" fill="#2e2e2e"/>
<circle cx="719.1" cy="583" r="16.3" fill="url(#gscrew)"/>
<circle cx="719.1" cy="584" r="10.5" fill="none" stroke="#2c2c2c" stroke-width="1.2" opacity="0.8"/>
<path d="M714.8 582.4L719.1 579.9L723.4 582.4V587.4L719.1 589.9L714.8 587.4Z" fill="#4b4b4b" stroke="#2f2f2f" stroke-width="0.7"/>
<!-- pin -->
<ellipse cx="693.9" cy="571.3" rx="5.2" ry="3.9" transform="rotate(35 693.9 571.3)" fill="#262626"/>
<ellipse cx="694.6" cy="572" rx="2.6" ry="1.8" transform="rotate(35 694.6 572)" fill="#3d3d3d"/>
</svg>
</body></html>
